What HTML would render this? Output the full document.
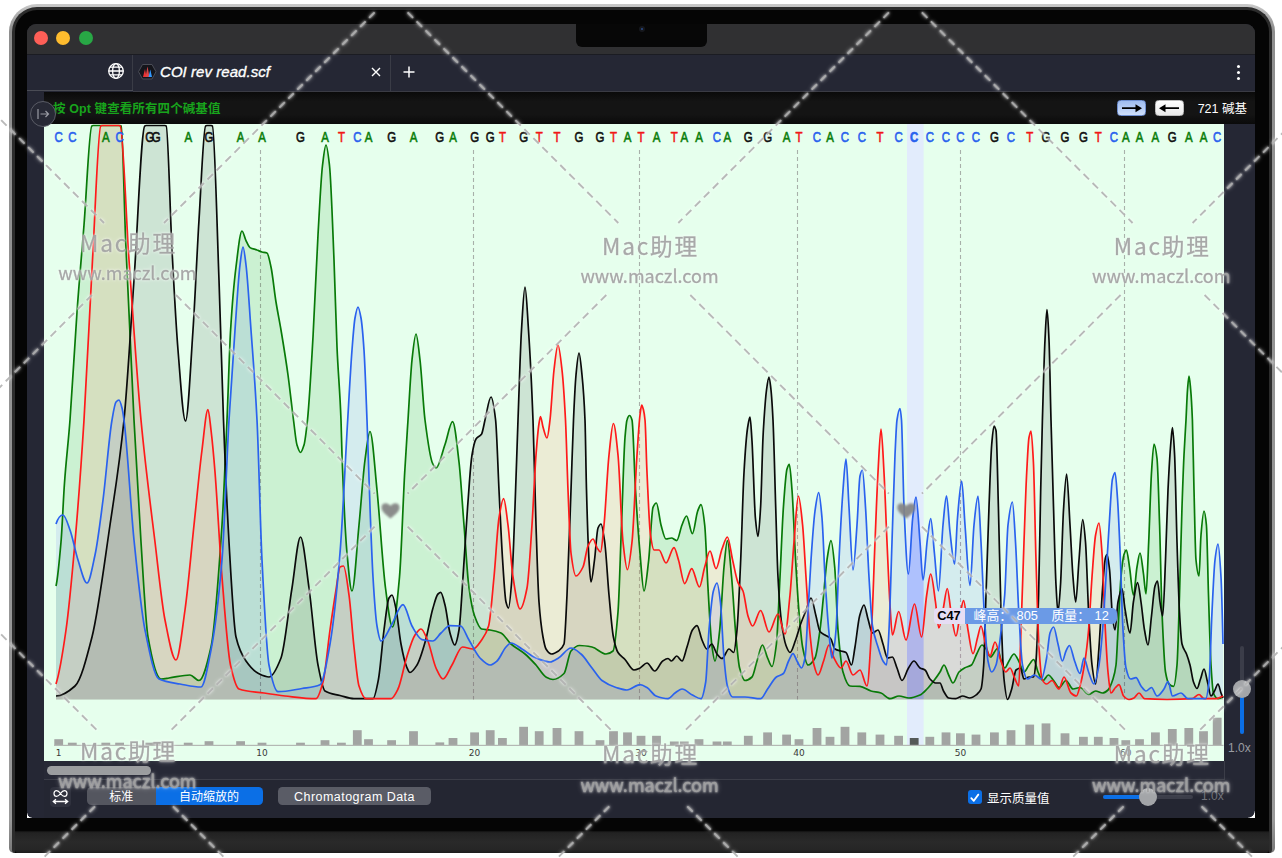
<!DOCTYPE html>
<html lang="zh">
<head>
<meta charset="utf-8">
<title>COI rev read.scf</title>
<style>
html,body{margin:0;padding:0;background:#fff;}
body{width:1282px;height:858px;overflow:hidden;position:relative;font-family:"Liberation Sans","Noto Sans CJK SC",sans-serif;}
.abs{position:absolute;}
#shell{left:9px;top:4.2px;width:1266px;height:849px;border-radius:28px 28px 5px 5px;background:linear-gradient(#c9c9c9,#8e8e8e 3%,#9a9a9a 96%,#777);}
#bezel{left:11.7px;top:7px;width:1260.5px;height:846px;border-radius:25px 25px 3px 3px;background:#050505;border:3.2px solid #2c2c2c;border-bottom:0;box-sizing:border-box;}
#hinge{left:15px;top:830.5px;width:1253.5px;height:22.5px;background:linear-gradient(#101010 0,#222 8%,#2a2a2a 50%,#262626 85%,#1c1c1c 100%);border-radius:0 0 3px 3px;}
#screen{left:27px;top:24px;width:1228px;height:794px;border-radius:9px 9px 0 0;overflow:hidden;background:#252734;}
#titlebar{left:0;top:0;width:1228px;height:29.9px;background:#303032;}
.tl{width:14px;height:14px;border-radius:7px;top:7.4px;}
#notch{left:549px;top:0;width:131px;height:22.7px;background:#070707;border-radius:0 0 6px 6px;}
#cam{left:611.5px;top:2px;width:6px;height:6px;border-radius:3px;background:#16181d;}
#cam i{position:absolute;left:2px;top:2px;width:2px;height:2px;border-radius:1px;background:#2a4a8a;}
#tabbar{left:0;top:29.9px;width:1228px;height:36.6px;background:#252734;border-top:1px solid #1b1c22;box-sizing:border-box;}
#tabsep1{left:105px;top:31px;width:1px;height:36px;background:#3a3c46;}
#tabsep2{left:363px;top:31px;width:1px;height:36px;background:#3a3c46;}
#tabline{left:0;top:66px;width:106px;height:1px;background:#4a4c55;}
#tabline2{left:106px;top:66.5px;width:1122px;height:1px;background:#3a3b44;}
#tabtitle{left:133px;top:38.5px;color:#fff;font-style:italic;font-size:15px;letter-spacing:.05px;-webkit-text-stroke:.35px #fff;white-space:nowrap;}
#hint{left:17px;top:67.5px;width:1211px;height:32.5px;background:linear-gradient(#0a0a0a,#141414 30%,#141414 70%,#0a0a0a);}
#hinttext{left:26px;top:74px;color:#18a31c;font-weight:bold;font-size:12.5px;white-space:nowrap;letter-spacing:.1px;}
#count{right:8px;top:74px;color:#fff;font-size:12.5px;white-space:nowrap;}
.abtn{top:75.5px;width:29px;height:16.5px;border-radius:3.5px;box-sizing:border-box;}
#fwd{left:1090px;background:linear-gradient(#9fbcf0,#cfe0fb);border:1px solid #6f8fd0;}
#rev{left:1128px;background:linear-gradient(#fff,#e9e9e9);border:1px solid #bdbdbd;}
#chart{left:17px;top:100px;width:1179.5px;height:636.5px;background:#e6ffed;overflow:hidden;}
svg.plot{position:absolute;left:0;top:0;}
svg.txt{position:absolute;left:0;top:0;overflow:visible;}
#circ{left:3.2px;top:77px;width:24px;height:24px;border-radius:13.5px;background:#272935;border:1.3px solid #5a5c66;box-sizing:content-box;}
#scroll{left:17px;top:736.5px;width:1179.5px;height:18px;background:#272936;border-bottom:1px solid #3b3d48;border-right:1px solid #3b3d48;}
#thumb{left:19.5px;top:742px;width:104.5px;height:9px;border-radius:4.5px;background:#9b9d9f;}
#tool{left:17px;top:755.5px;width:1211px;height:38.5px;background:#242632;}
#fit{left:22.5px;top:762.5px;width:21px;height:20px;border-radius:4px;background:#30323e;}
.seg{top:763px;height:18px;color:#fff;font-size:12px;line-height:20px;overflow:hidden;text-align:center;white-space:nowrap;}
#seg1{left:60px;width:68.5px;background:#54565f;border-radius:4.5px 0 0 4.5px;}
#seg2{left:128.5px;width:107px;background:#0b6fe6;border-radius:0 4.5px 4.5px 0;}
#cdata{left:251px;width:153px;background:#5a5c66;border-radius:4.5px;font-size:12.5px;letter-spacing:.45px;}
#chk{left:941px;top:766px;width:13.5px;height:13.5px;border-radius:3px;background:#0b6fe6;}
#chklabel{left:960px;top:763.5px;color:#fff;font-size:12.5px;white-space:nowrap;}
#hs0{left:1076px;top:771px;width:90px;height:4px;border-radius:2px;background:#3b3d49;}
#hs1{left:1076px;top:771px;width:45px;height:4px;border-radius:2px;background:#0b6fe6;}
#hsk{left:1112px;top:764px;width:18px;height:18px;border-radius:9px;background:#a3a5a8;}
#hsl{left:1174px;top:764.5px;color:#70727a;font-size:12px;}
#vs0{left:1213.3px;top:622px;width:4px;height:88px;border-radius:2px;background:#3b3d49;}
#vs1{left:1213.3px;top:665px;width:4px;height:45px;border-radius:2px;background:#0b6fe6;}
#vsk{left:1206.3px;top:656px;width:18px;height:18px;border-radius:9px;background:#a3a5a8;}
#vsl{left:1201px;top:717px;color:#9a9ca2;font-size:12px;}
#corner{left:1221px;top:787px;width:7px;height:7px;background:radial-gradient(circle at 0 0,#242632 6.3px,#fff 7px);}
#tip{left:889.7px;top:484.2px;height:15.4px;white-space:nowrap;font-size:12.8px;line-height:15.4px;}
#tip b{display:inline-block;background:#e6ddf4;color:#000;padding:0 2px 0 3.5px;border-radius:4px 0 0 4px;height:15.4px;width:26px;}
#tip span{display:inline-block;background:#6b9ae6;color:#fff;border-radius:0 5px 5px 0;height:15.4px;width:152px;text-align:center;word-spacing:1px;}
.wm{color:rgba(150,150,150,.82);text-shadow:0 0 3px rgba(255,255,255,.75),0 0 1px rgba(255,255,255,.6);white-space:nowrap;text-align:center;width:200px;font-family:"Liberation Sans","Noto Sans CJK SC",sans-serif;}
.wm .a{font-size:22.5px;letter-spacing:2.2px;line-height:26px;}
.wm .b{font-size:18.5px;line-height:26px;margin-top:4px;letter-spacing:.2px;}
</style>
</head>
<body>
<div id="shell" class="abs"></div>
<div id="bezel" class="abs"></div>
<div id="hinge" class="abs"></div>
<div id="screen" class="abs">
  <div id="titlebar" class="abs"></div>
  <div class="abs tl" style="left:6.6px;background:#fe5f57"></div>
  <div class="abs tl" style="left:29px;background:#febc2e"></div>
  <div class="abs tl" style="left:51.7px;background:#28a745"></div>
  <div id="notch" class="abs"></div><div id="cam" class="abs"><i></i></div>
  <div id="tabbar" class="abs"></div>
  <div id="tabsep1" class="abs"></div><div id="tabsep2" class="abs"></div>
  <div id="tabline" class="abs"></div><div id="tabline2" class="abs"></div>
  <svg class="abs" style="left:80px;top:38px" width="18" height="18" viewBox="0 0 18 18" fill="none" stroke="#fff" stroke-width="1.3"><circle cx="9" cy="9" r="7.3"/><ellipse cx="9" cy="9" rx="3.4" ry="7.3"/><path d="M1.7 9H16.3M2.8 5.2H15.2M2.8 12.8H15.2"/></svg>
  <svg class="abs" style="left:110px;top:39px" width="20" height="18" viewBox="0 0 20 18"><path d="M5.5 1.5H15L19 8.7L15 16H5.5L1.5 8.7Z" fill="#14151b" stroke="#4a4c56" stroke-width="1"/><path d="M6 14L8 6L9.5 14Z" fill="#e33"/><path d="M8.5 14L10.5 3.5L12.5 14Z" fill="#d44"/><path d="M11.5 14L13.3 6.5L15 14Z" fill="#39f"/></svg>
  <div id="tabtitle" class="abs">COI rev read.scf</div>
  <svg class="abs" style="left:344px;top:43px" width="10" height="10" viewBox="0 0 10 10" stroke="#fff" stroke-width="1.4"><path d="M1 1L9 9M9 1L1 9"/></svg>
  <svg class="abs" style="left:376px;top:42px" width="12" height="12" viewBox="0 0 12 12" stroke="#fff" stroke-width="1.5"><path d="M6 0.5V11.5M0.5 6H11.5"/></svg>
  <div class="abs" style="left:1209.5px;top:41px;width:3px;height:3px;border-radius:2px;background:#fff;box-shadow:0 6px 0 #fff,0 12px 0 #fff"></div>
  <div id="hint" class="abs"></div>
  <div id="hinttext" class="abs">按 Opt 键查看所有四个碱基值</div>
  <div id="fwd" class="abs abtn"><svg width="27" height="14.5" viewBox="0 0 27 14.5"><path d="M4 7.2H19" stroke="#000" stroke-width="1.8"/><path d="M17.5 3.2L24 7.2L17.5 11.2Z" fill="#000"/></svg></div>
  <div id="rev" class="abs abtn"><svg width="27" height="14.5" viewBox="0 0 27 14.5"><path d="M8 7.2H23" stroke="#000" stroke-width="1.8"/><path d="M9.5 3.2L3 7.2L9.5 11.2Z" fill="#000"/></svg></div>
  <div id="count" class="abs">721 碱基</div>
  <div id="chart" class="abs">
<svg class="plot" width="1179.5" height="636.5" viewBox="0 0 1179.5 636.5">
<rect x="863.0" y="0" width="16.6" height="621.5" fill="#e2ecfc"/>
<line x1="216.5" y1="26" x2="216.5" y2="575.5" stroke="#a8b0aa" stroke-width="1.1" stroke-dasharray="4 3"/>
<line x1="429.5" y1="26" x2="429.5" y2="575.5" stroke="#a8b0aa" stroke-width="1.1" stroke-dasharray="4 3"/>
<line x1="595.5" y1="26" x2="595.5" y2="575.5" stroke="#a8b0aa" stroke-width="1.1" stroke-dasharray="4 3"/>
<line x1="753.5" y1="26" x2="753.5" y2="575.5" stroke="#a8b0aa" stroke-width="1.1" stroke-dasharray="4 3"/>
<line x1="916.5" y1="26" x2="916.5" y2="575.5" stroke="#a8b0aa" stroke-width="1.1" stroke-dasharray="4 3"/>
<line x1="1080.5" y1="26" x2="1080.5" y2="575.5" stroke="#a8b0aa" stroke-width="1.1" stroke-dasharray="4 3"/>
<path d="M12.0 462.0C13.7 455.2 15.3 437.6 17.0 418.0C18.2 404.3 19.3 375.1 20.5 359.0C22.3 333.6 24.2 320.0 26.0 296.0C28.3 265.5 30.7 220.1 33.0 188.0C35.3 155.9 37.7 130.3 40.0 101.0C42.6 68.4 45.2 3.7 47.8 2.0C48.2 1.7 48.6 1.5 49.0 1.5C58.0 1.5 67.0 1.5 76.0 1.5C76.4 1.5 76.8 1.7 77.2 2.0C78.7 3.0 80.2 82.6 81.7 118.0C84.5 183.4 87.2 243.0 90.0 296.0C92.3 340.7 94.7 382.4 97.0 418.0C99.3 453.6 101.7 500.0 104.0 513.0C108.3 537.1 112.7 555.0 117.0 555.0C119.7 555.0 122.3 554.4 125.0 554.0C132.0 553.1 139.0 551.0 146.0 551.0C149.0 551.0 152.0 556.5 155.0 556.5C159.0 556.5 163.0 541.0 167.0 523.0C170.7 506.5 174.3 456.4 178.0 401.0C179.7 375.8 181.3 334.2 183.0 296.0C184.2 268.5 185.4 225.6 186.6 206.0C188.4 176.7 190.2 157.3 192.0 143.0C194.0 127.1 196.0 107.0 198.0 107.0C199.3 107.0 200.7 113.9 202.0 116.6C203.3 119.3 204.7 122.8 206.0 123.6C208.3 125.0 210.7 125.1 213.0 126.0C214.7 126.6 216.3 127.6 218.0 128.0C219.7 128.4 221.3 128.3 223.0 129.0C224.3 129.5 225.7 136.9 227.0 143.0C228.7 150.7 230.3 167.6 232.0 178.0C233.7 188.4 235.3 196.1 237.0 206.0C239.3 219.9 241.7 234.1 244.0 251.0C245.8 264.3 247.7 282.1 249.5 296.0C250.7 304.9 251.8 317.2 253.0 321.0C254.2 324.8 255.3 328.5 256.5 328.5C257.7 328.5 258.8 324.8 260.0 321.0C261.2 317.2 262.3 307.0 263.5 296.0C265.3 278.7 267.2 244.9 269.0 213.0C270.7 184.0 272.3 140.2 274.0 111.0C275.5 84.7 277.0 54.0 278.5 41.5C279.7 31.8 280.8 21.0 282.0 21.0C283.2 21.0 284.3 31.1 285.5 41.5C287.0 54.9 288.5 99.1 290.0 136.0C291.0 160.6 292.0 200.4 293.0 223.0C294.3 253.2 295.7 261.9 297.0 296.0C297.3 304.5 297.7 322.1 298.0 331.0C299.7 375.7 301.3 410.7 303.0 429.0C304.7 447.3 306.3 467.0 308.0 467.0C310.3 467.0 312.7 424.6 315.0 401.0C317.0 380.8 319.0 350.8 321.0 336.0C322.7 323.7 324.3 307.5 326.0 307.5C328.3 307.5 330.7 343.5 333.0 366.0C335.8 393.3 338.7 443.0 341.5 464.0C343.8 481.3 346.2 503.0 348.5 503.0C350.8 503.0 353.2 478.2 355.5 453.0C357.2 434.3 359.0 379.0 360.7 348.5C361.8 329.1 362.9 313.0 364.0 296.0C365.3 275.4 366.7 248.1 368.0 236.0C369.3 223.9 370.7 210.0 372.0 210.0C373.3 210.0 374.7 224.9 376.0 236.0C377.7 249.9 379.3 282.8 381.0 296.0C383.6 316.3 386.1 334.7 388.7 339.7C389.8 341.9 390.9 344.0 392.0 344.0C395.0 344.0 398.0 328.9 401.0 320.5C403.5 313.4 406.1 297.7 408.6 297.7C410.7 297.7 412.9 319.8 415.0 338.0C416.7 352.2 418.3 380.0 420.0 401.0C421.7 422.0 423.3 452.0 425.0 464.0C426.9 477.5 428.7 486.9 430.6 492.0C432.9 498.4 435.3 504.5 437.6 505.0C440.4 505.6 443.2 505.5 446.0 506.0C449.7 506.6 453.3 507.4 457.0 509.0C460.3 510.5 463.7 517.1 467.0 520.0C471.7 524.1 476.3 526.1 481.0 530.0C484.7 533.1 488.3 537.0 492.0 541.0C495.3 544.6 498.7 551.2 502.0 553.0C504.3 554.2 506.7 555.5 509.0 555.5C512.7 555.5 516.3 553.1 520.0 549.5C522.3 547.2 524.7 529.6 527.0 527.0C529.8 523.9 532.7 521.5 535.5 521.5C539.7 521.5 543.8 522.2 548.0 523.0C552.7 523.9 557.3 530.0 562.0 530.0C564.3 530.0 566.7 529.0 569.0 527.0C570.7 525.6 572.3 508.4 574.0 488.0C575.2 473.7 576.3 430.1 577.5 401.0C578.7 371.9 579.8 328.0 581.0 313.5C581.7 305.2 582.3 298.0 583.0 296.0C583.8 293.4 584.7 291.5 585.5 291.5C586.3 291.5 587.2 293.4 588.0 296.0C589.2 299.7 590.3 346.6 591.5 366.0C593.0 390.9 594.5 412.1 596.0 429.0C597.3 444.0 598.7 467.0 600.0 467.0C601.6 467.0 603.1 449.5 604.7 436.0C606.1 423.7 607.6 386.7 609.0 383.4C610.1 380.8 611.3 379.0 612.4 379.0C613.9 379.0 615.5 395.6 617.0 401.0C618.7 406.9 620.3 415.0 622.0 415.0C623.8 415.0 625.7 414.0 627.5 414.0C629.2 414.0 631.0 416.6 632.7 416.6C634.5 416.6 636.2 405.2 638.0 401.0C639.5 397.4 641.0 392.0 642.5 392.0C644.5 392.0 646.4 409.6 648.4 409.6C650.2 409.6 651.9 391.6 653.7 387.0C654.8 384.2 655.9 380.6 657.0 380.6C658.2 380.6 659.5 390.3 660.7 401.0C661.8 410.5 662.9 445.4 664.0 464.0C665.2 484.9 666.5 510.6 667.7 520.0C668.8 528.4 669.9 537.0 671.0 537.0C672.6 537.0 674.1 520.3 675.7 506.0C677.1 492.9 678.6 457.4 680.0 443.0C681.1 431.6 682.3 416.6 683.4 416.6C684.8 416.6 686.2 438.2 687.6 453.0C689.1 468.5 690.5 497.6 692.0 513.0C693.2 525.6 694.4 539.4 695.6 544.0C697.4 550.8 699.2 556.5 701.0 556.5C703.3 556.5 705.7 555.1 708.0 553.0C709.7 551.5 711.3 542.1 713.0 537.0C714.8 531.5 716.6 521.0 718.4 521.0C720.1 521.0 721.9 530.2 723.6 534.0C725.1 537.2 726.5 542.5 728.0 542.5C729.5 542.5 730.9 532.0 732.4 520.0C733.6 510.2 734.8 476.4 736.0 453.0C737.1 430.9 738.3 399.3 739.4 383.4C740.6 366.5 741.8 348.8 743.0 345.0C743.8 342.5 744.5 340.4 745.3 340.4C746.2 340.4 747.1 354.7 748.0 366.0C749.2 381.0 750.4 415.5 751.6 436.0C752.7 455.4 753.9 474.5 755.0 488.0C756.2 502.3 757.4 516.8 758.6 523.0C760.4 532.2 762.2 541.0 764.0 541.0C766.3 541.0 768.7 538.1 771.0 534.0C772.7 531.1 774.3 518.0 776.0 506.0C777.2 497.3 778.4 483.0 779.6 471.0C780.7 459.7 781.9 443.5 783.0 436.0C784.3 427.1 785.7 416.6 787.0 416.6C788.2 416.6 789.5 430.1 790.7 443.0C791.8 454.5 792.9 492.8 794.0 506.0C795.7 526.0 797.3 542.4 799.0 548.0C801.3 555.8 803.7 561.8 806.0 562.0C809.3 562.3 812.7 562.2 816.0 562.4C819.7 562.7 823.3 566.0 827.0 567.0C830.3 567.9 833.7 568.0 837.0 569.0C840.0 569.9 843.0 574.7 846.0 574.7C849.0 574.7 852.0 572.0 855.0 572.0C858.3 572.0 861.7 574.0 865.0 574.0C868.7 574.0 872.3 572.6 876.0 571.0C878.3 570.0 880.7 567.3 883.0 565.0C885.3 562.7 887.7 559.6 890.0 556.5C892.0 553.9 894.0 551.2 896.0 548.0C897.3 545.9 898.7 541.0 900.0 541.0C901.6 541.0 903.1 547.9 904.7 551.0C906.1 553.8 907.6 559.0 909.0 559.0C911.0 559.0 913.0 550.1 915.0 548.0C916.8 546.1 918.7 545.0 920.5 544.0C922.8 542.7 925.2 542.7 927.5 541.0C929.2 539.7 931.0 533.3 932.7 530.0C934.5 526.7 936.2 521.0 938.0 521.0C939.2 521.0 940.3 522.7 941.5 524.0C943.2 525.9 944.8 533.0 946.5 533.0C948.8 533.0 951.2 524.5 953.5 524.5C954.7 524.5 955.8 533.0 957.0 536.0C958.2 539.2 959.5 544.0 960.7 544.0C962.1 544.0 963.6 539.2 965.0 537.0C966.7 534.5 968.3 530.0 970.0 530.0C971.6 530.0 973.1 534.3 974.7 537.0C976.5 540.1 978.2 548.0 980.0 548.0C981.7 548.0 983.3 543.1 985.0 541.0C986.6 539.0 988.1 535.5 989.7 535.5C991.1 535.5 992.6 544.9 994.0 548.0C995.7 551.6 997.3 556.5 999.0 556.5C1000.8 556.5 1002.6 551.0 1004.4 551.0C1006.1 551.0 1007.9 554.5 1009.6 556.5C1011.4 558.6 1013.2 563.5 1015.0 563.5C1017.3 563.5 1019.7 556.5 1022.0 556.5C1024.3 556.5 1026.7 565.0 1029.0 565.0C1031.3 565.0 1033.7 563.5 1036.0 563.5C1038.9 563.5 1041.7 570.5 1044.6 570.5C1046.9 570.5 1049.3 567.0 1051.6 567.0C1053.9 567.0 1056.3 569.0 1058.6 569.0C1060.4 569.0 1062.2 567.6 1064.0 566.0C1065.7 564.5 1067.3 560.1 1069.0 555.0C1070.0 551.9 1071.0 548.7 1072.0 541.0C1072.7 535.9 1073.3 517.7 1074.0 506.0C1075.0 488.4 1076.0 463.5 1077.0 453.0C1078.0 442.5 1079.0 433.6 1080.0 430.6C1080.8 428.2 1081.6 426.0 1082.4 426.0C1083.4 426.0 1084.5 436.6 1085.5 443.0C1086.8 451.0 1088.1 471.0 1089.4 471.0C1090.6 471.0 1091.8 449.9 1093.0 443.0C1094.0 437.2 1095.0 429.0 1096.0 429.0C1097.2 429.0 1098.3 441.9 1099.5 450.0C1100.3 455.8 1101.2 470.0 1102.0 470.0C1102.9 470.0 1103.8 437.5 1104.7 418.0C1105.6 397.8 1106.6 363.0 1107.5 348.5C1108.3 335.6 1109.2 320.0 1110.0 320.0C1111.0 320.0 1112.0 326.2 1113.0 334.5C1113.9 341.7 1114.7 374.9 1115.6 401.0C1116.4 425.0 1117.2 469.0 1118.0 488.0C1119.2 515.8 1120.3 541.3 1121.5 548.0C1122.7 554.7 1123.8 558.9 1125.0 560.0C1126.5 561.4 1128.1 562.4 1129.6 562.4C1130.7 562.4 1131.9 553.0 1133.0 541.0C1133.8 532.2 1134.7 497.0 1135.5 471.0C1136.3 445.0 1137.2 407.8 1138.0 383.0C1138.7 363.2 1139.3 344.9 1140.0 331.0C1140.7 317.1 1141.3 308.5 1142.0 296.0C1142.5 286.6 1143.0 272.4 1143.5 266.0C1144.0 259.6 1144.5 252.0 1145.0 252.0C1145.6 252.0 1146.1 259.6 1146.7 266.0C1147.3 272.4 1147.8 281.7 1148.4 296.0C1148.9 309.5 1149.5 345.2 1150.0 366.0C1150.7 392.0 1151.3 429.5 1152.0 436.0C1153.0 445.7 1154.0 452.0 1155.0 452.0C1155.7 452.0 1156.3 418.9 1157.0 411.0C1158.0 399.1 1159.0 387.0 1160.0 387.0C1160.8 387.0 1161.6 392.9 1162.4 401.0C1163.1 408.1 1163.8 449.6 1164.5 471.0C1165.3 496.4 1166.2 527.3 1167.0 541.0C1167.8 554.1 1168.6 567.0 1169.4 569.0C1170.9 572.8 1172.5 574.7 1174.0 574.7C1175.7 574.7 1177.3 574.4 1179.0 572.0L1179.0 575.5L12.0 575.5Z" fill="rgba(0,128,0,0.115)" stroke="none"/>
<path d="M12.0 572.0C18.3 572.0 24.7 567.7 31.0 562.0C36.7 556.9 42.3 535.2 48.0 513.0C54.0 489.4 60.0 442.0 66.0 401.0C70.7 369.1 75.3 342.4 80.0 296.0C83.3 262.9 86.7 203.1 90.0 156.0C93.6 105.1 97.2 4.3 100.8 2.0C101.2 1.7 101.6 1.5 102.0 1.5C108.3 1.5 114.7 1.5 121.0 1.5C121.4 1.5 121.8 1.7 122.2 2.0C124.1 3.3 126.1 89.8 128.0 126.0C130.0 163.5 132.0 201.6 134.0 226.0C136.5 256.5 139.0 297.0 141.5 297.0C144.0 297.0 146.5 242.8 149.0 206.0C151.0 176.6 153.0 128.1 155.0 96.0C157.2 60.7 159.4 3.5 161.6 2.0C162.0 1.7 162.4 1.5 162.8 1.5C164.3 1.5 165.7 1.5 167.2 1.5C167.6 1.5 168.0 1.7 168.4 2.0C170.6 3.5 172.8 96.8 175.0 156.0C176.5 196.4 178.0 256.9 179.5 296.0C181.3 343.7 183.2 386.8 185.0 418.0C187.3 457.7 189.7 503.1 192.0 513.0C195.3 527.2 198.7 532.2 202.0 537.0C206.2 543.0 210.3 547.4 214.5 549.5C218.0 551.2 221.5 553.0 225.0 553.0C229.0 553.0 233.0 544.2 237.0 534.0C240.7 524.6 244.3 486.6 248.0 464.0C250.8 446.5 253.7 413.0 256.5 413.0C259.3 413.0 262.2 444.0 265.0 464.0C268.0 485.1 271.0 525.7 274.0 541.0C276.3 552.9 278.7 565.6 281.0 567.0C286.0 570.1 291.0 570.2 296.0 571.5C300.7 572.7 305.3 574.7 310.0 574.7C316.3 574.7 322.7 574.7 329.0 574.7C330.8 574.7 332.7 564.4 334.5 555.0C336.3 545.6 338.2 519.6 340.0 506.0C341.7 493.6 343.3 476.7 345.0 474.0C346.0 472.4 347.0 471.0 348.0 471.0C349.3 471.0 350.7 478.9 352.0 485.0C353.7 492.7 355.3 511.4 357.0 520.0C358.8 529.5 360.7 538.2 362.5 542.5C363.7 545.2 364.8 548.5 366.0 548.5C368.3 548.5 370.7 544.6 373.0 541.0C375.9 536.5 378.8 526.2 381.7 516.0C384.0 507.8 386.4 493.0 388.7 485.0C390.5 479.0 392.2 471.6 394.0 470.0C394.9 469.2 395.8 468.4 396.7 468.4C398.1 468.4 399.6 475.5 401.0 481.0C402.7 487.4 404.3 503.2 406.0 509.0C407.6 514.5 409.1 521.0 410.7 521.0C412.1 521.0 413.6 514.0 415.0 506.0C416.3 498.6 417.7 471.9 419.0 453.0C420.5 431.3 422.1 403.4 423.6 383.0C425.1 363.5 426.5 339.7 428.0 331.0C429.3 323.1 430.7 317.0 432.0 315.0C433.9 312.2 435.7 312.9 437.6 310.0C438.7 308.2 439.9 300.5 441.0 296.0C443.0 288.0 445.0 273.0 447.0 273.0C448.5 273.0 450.1 283.3 451.6 296.0C452.7 305.4 453.9 343.3 455.0 366.0C456.2 390.0 457.4 417.9 458.6 436.0C459.7 453.1 460.9 473.6 462.0 478.0C462.8 481.2 463.7 484.0 464.5 484.0C465.7 484.0 466.8 468.2 468.0 453.0C469.0 440.0 470.0 408.9 471.0 383.0C472.0 357.1 473.0 323.3 474.0 296.0C475.2 264.1 476.3 225.4 477.5 206.0C478.7 186.6 479.8 163.0 481.0 163.0C482.2 163.0 483.3 188.4 484.5 206.0C486.0 228.6 487.5 257.1 489.0 296.0C490.0 321.9 491.0 371.4 492.0 401.0C493.0 430.6 494.0 464.6 495.0 478.0C496.3 495.8 497.7 505.8 499.0 513.0C500.0 518.4 501.0 523.4 502.0 525.0C503.8 527.9 505.7 530.0 507.5 530.0C509.8 530.0 512.2 528.5 514.5 527.0C516.3 525.8 518.2 524.7 520.0 520.0C521.0 517.4 522.0 490.9 523.0 471.0C524.3 444.4 525.7 402.2 527.0 366.0C527.8 343.4 528.7 314.3 529.5 296.0C530.3 277.7 531.2 259.8 532.0 251.0C533.0 240.4 534.0 229.0 535.0 229.0C536.0 229.0 537.0 241.1 538.0 251.0C539.0 260.9 540.0 271.9 541.0 296.0C541.5 308.0 542.0 348.1 542.5 366.0C543.3 395.8 544.2 423.0 545.0 436.0C545.7 446.4 546.3 458.0 547.0 458.0C548.2 458.0 549.3 444.7 550.5 436.0C551.7 427.3 552.8 406.7 554.0 404.0C555.0 401.7 556.0 400.0 557.0 400.0C558.2 400.0 559.5 409.5 560.7 418.0C562.1 427.9 563.6 455.6 565.0 471.0C566.5 486.8 567.9 505.7 569.4 513.0C570.9 520.7 572.5 526.0 574.0 528.5C576.3 532.2 578.7 533.0 581.0 535.5C584.0 538.7 587.0 546.0 590.0 546.0C592.0 546.0 594.0 544.9 596.0 544.0C598.3 542.9 600.7 539.0 603.0 539.0C605.6 539.0 608.1 547.0 610.7 547.0C613.4 547.0 616.0 538.8 618.7 537.0C620.5 535.8 622.2 534.5 624.0 534.5C625.2 534.5 626.3 537.0 627.5 537.0C629.2 537.0 631.0 532.0 632.7 532.0C634.5 532.0 636.2 537.0 638.0 537.0C639.7 537.0 641.3 527.9 643.0 523.0C644.8 517.7 646.6 508.6 648.4 506.0C649.9 503.8 651.5 501.6 653.0 501.6C654.7 501.6 656.3 512.3 658.0 516.0C659.7 519.7 661.3 525.0 663.0 525.0C664.6 525.0 666.1 520.0 667.7 520.0C669.5 520.0 671.2 527.9 673.0 530.0C674.7 532.0 676.3 534.5 678.0 534.5C680.3 534.5 682.7 525.0 685.0 525.0C686.6 525.0 688.1 528.5 689.7 528.5C690.8 528.5 691.9 516.9 693.0 506.0C694.2 493.7 695.5 463.3 696.7 436.0C697.8 411.6 698.9 367.1 700.0 348.5C701.2 327.6 702.5 310.6 703.7 303.0C704.5 298.3 705.2 293.0 706.0 293.0C706.7 293.0 707.3 306.8 708.0 317.0C709.1 334.3 710.3 382.1 711.4 394.0C712.3 403.1 713.1 412.4 714.0 412.4C714.9 412.4 715.7 397.2 716.6 383.0C717.4 369.9 718.2 330.4 719.0 313.5C719.3 306.5 719.7 300.9 720.0 296.0C720.8 283.8 721.7 272.0 722.5 266.0C723.3 260.0 724.2 253.0 725.0 253.0C725.7 253.0 726.3 260.0 727.0 266.0C727.7 272.0 728.3 282.6 729.0 296.0C729.9 314.1 730.8 354.8 731.7 383.0C732.5 407.0 733.2 438.8 734.0 453.0C735.2 475.3 736.4 490.1 737.6 499.0C739.1 509.9 740.5 517.7 742.0 521.5C743.3 524.9 744.7 528.5 746.0 528.5C747.9 528.5 749.7 520.9 751.6 516.0C753.4 511.3 755.2 504.0 757.0 499.0C758.7 494.4 760.3 490.8 762.0 486.6C763.7 482.4 765.3 474.0 767.0 474.0C768.7 474.0 770.3 485.8 772.0 492.0C773.3 497.0 774.7 505.9 776.0 507.5C777.7 509.5 779.3 509.9 781.0 511.0C782.9 512.2 784.7 512.6 786.6 514.5C788.1 516.0 789.5 524.1 791.0 525.0C793.0 526.2 795.0 526.4 797.0 527.0C798.7 527.5 800.3 527.6 802.0 528.5C803.8 529.5 805.7 541.0 807.5 541.0C808.7 541.0 809.8 529.8 811.0 523.0C812.5 514.1 814.1 497.6 815.6 492.0C817.1 486.7 818.5 481.0 820.0 481.0C821.3 481.0 822.7 490.6 824.0 495.0C825.5 499.9 827.0 509.0 828.5 509.0C830.3 509.0 832.2 506.0 834.0 506.0C835.7 506.0 837.3 515.1 839.0 520.0C840.5 524.5 842.1 534.0 843.6 534.0C845.2 534.0 846.8 533.0 848.4 533.0C849.9 533.0 851.5 540.3 853.0 544.0C854.7 548.1 856.3 556.5 858.0 556.5C860.2 556.5 862.3 547.3 864.5 544.0C866.3 541.2 868.2 537.0 870.0 537.0C872.0 537.0 874.0 542.8 876.0 544.0C877.7 545.0 879.3 544.9 881.0 546.0C882.7 547.1 884.3 553.3 886.0 555.0C887.8 556.9 889.7 559.0 891.5 559.0C893.0 559.0 894.5 559.0 896.0 559.0C897.2 559.0 898.3 565.0 899.5 567.0C901.2 570.0 903.0 573.7 904.7 574.0C907.0 574.5 909.4 574.7 911.7 574.7C914.0 574.7 916.4 572.0 918.7 572.0C921.0 572.0 923.4 574.0 925.7 574.0C928.0 574.0 930.4 572.2 932.7 570.5C934.1 569.4 935.6 568.4 937.0 565.0C937.9 562.9 938.8 553.6 939.7 541.0C940.5 530.3 941.2 493.9 942.0 471.0C943.0 441.1 944.0 408.8 945.0 383.0C945.9 359.8 946.8 331.1 947.7 320.5C948.5 311.5 949.2 302.0 950.0 302.0C950.7 302.0 951.3 303.8 952.0 306.5C952.8 309.8 953.6 354.5 954.4 383.0C955.3 413.8 956.1 462.9 957.0 488.0C958.0 517.0 959.0 545.6 960.0 555.0C961.2 566.0 962.3 575.5 963.5 575.5C964.9 575.5 966.3 569.5 967.7 565.0C969.1 560.4 970.6 547.2 972.0 546.0C973.5 544.8 974.9 544.0 976.4 544.0C977.6 544.0 978.8 555.0 980.0 555.0C981.7 555.0 983.3 553.0 985.0 553.0C986.6 553.0 988.1 553.0 989.7 553.0C990.5 553.0 991.2 545.3 992.0 537.0C992.9 527.6 993.7 500.5 994.6 471.0C995.3 447.2 996.0 397.5 996.7 366.0C997.3 340.5 997.8 316.2 998.4 296.0C999.3 265.2 1000.1 233.4 1001.0 216.0C1001.7 202.6 1002.3 185.5 1003.0 185.5C1003.7 185.5 1004.3 201.3 1005.0 216.0C1005.7 230.7 1006.3 271.2 1007.0 296.0C1007.9 328.3 1008.7 357.6 1009.6 386.0C1010.4 412.3 1011.2 446.1 1012.0 461.0C1012.7 473.4 1013.3 488.0 1014.0 488.0C1014.8 488.0 1015.7 473.4 1016.5 461.0C1017.5 446.1 1018.5 401.9 1019.5 386.0C1020.5 369.6 1021.6 350.0 1022.6 350.0C1023.7 350.0 1024.9 382.7 1026.0 401.0C1027.0 417.1 1028.0 441.0 1029.0 453.0C1029.9 463.8 1030.8 478.0 1031.7 478.0C1032.8 478.0 1033.9 448.9 1035.0 436.0C1036.2 421.5 1037.5 395.6 1038.7 395.6C1039.6 395.6 1040.6 407.1 1041.5 418.0C1042.5 430.1 1043.6 468.9 1044.6 488.0C1045.7 509.0 1046.9 532.0 1048.0 541.0C1049.2 550.5 1050.4 560.0 1051.6 560.0C1052.7 560.0 1053.9 537.8 1055.0 523.0C1056.2 507.3 1057.4 479.4 1058.6 464.0C1059.5 452.0 1060.5 437.1 1061.4 434.0C1061.9 432.2 1062.5 430.6 1063.0 430.6C1063.9 430.6 1064.7 438.5 1065.6 446.0C1066.5 454.1 1067.5 484.5 1068.4 492.0C1069.3 499.0 1070.1 506.0 1071.0 506.0C1072.0 506.0 1073.0 483.1 1074.0 478.0C1075.3 471.2 1076.7 464.5 1078.0 464.5C1079.0 464.5 1080.0 479.3 1081.0 485.0C1082.7 494.5 1084.3 509.0 1086.0 509.0C1087.1 509.0 1088.3 485.0 1089.4 478.0C1090.8 469.3 1092.2 458.6 1093.6 458.6C1094.7 458.6 1095.9 470.5 1097.0 478.0C1098.2 485.8 1099.3 499.5 1100.5 506.0C1101.7 512.5 1102.8 521.0 1104.0 521.0C1105.2 521.0 1106.3 501.8 1107.5 492.0C1108.7 482.2 1109.8 465.7 1111.0 462.0C1111.8 459.4 1112.7 457.0 1113.5 457.0C1114.3 457.0 1115.2 472.6 1116.0 478.0C1116.9 483.8 1117.8 492.0 1118.7 492.0C1119.6 492.0 1120.6 457.8 1121.5 436.0C1122.3 416.5 1123.2 383.3 1124.0 366.0C1125.0 345.2 1126.0 328.1 1127.0 317.0C1127.5 311.4 1128.0 303.7 1128.5 303.7C1129.2 303.7 1129.9 317.7 1130.6 331.0C1131.4 346.2 1132.2 392.7 1133.0 418.0C1133.8 444.4 1134.7 473.4 1135.5 488.0C1136.3 502.6 1137.2 516.6 1138.0 520.0C1139.5 526.1 1141.0 526.1 1142.5 530.0C1143.7 533.1 1144.8 536.5 1146.0 541.0C1147.2 545.5 1148.3 554.9 1149.5 558.0C1150.7 561.1 1151.8 564.5 1153.0 564.5C1154.2 564.5 1155.3 558.2 1156.5 555.0C1157.7 551.8 1158.8 545.0 1160.0 545.0C1161.2 545.0 1162.3 553.5 1163.5 558.0C1164.7 562.5 1165.8 572.0 1167.0 572.0C1168.2 572.0 1169.3 568.9 1170.5 567.0C1171.7 565.1 1172.8 560.0 1174.0 560.0C1175.0 560.0 1176.0 566.3 1177.0 569.0C1177.7 570.8 1178.3 572.5 1179.0 574.0L1179.0 575.5L12.0 575.5Z" fill="rgba(0,0,0,0.105)" stroke="none"/>
<path d="M12.0 560.0C15.3 549.7 18.7 529.3 22.0 506.0C25.0 485.0 28.0 452.1 31.0 418.0C34.0 383.9 37.0 343.4 40.0 296.0C42.8 251.3 45.7 185.2 48.5 136.0C51.3 87.9 54.0 3.8 56.8 2.0C57.2 1.7 57.6 1.5 58.0 1.5C63.7 1.5 69.3 1.5 75.0 1.5C75.4 1.5 75.8 1.7 76.2 2.0C79.1 3.9 82.1 94.2 85.0 136.0C89.0 193.1 93.0 253.6 97.0 296.0C101.7 345.5 106.3 379.7 111.0 418.0C114.3 445.4 117.7 479.4 121.0 496.0C124.7 514.3 128.3 536.0 132.0 536.0C135.0 536.0 138.0 507.0 141.0 486.0C144.0 465.0 147.0 429.2 150.0 401.0C152.7 375.9 155.3 346.8 158.0 326.0C160.0 310.4 162.0 285.5 164.0 285.5C165.0 285.5 166.0 297.8 167.0 306.0C168.3 316.9 169.7 331.8 171.0 348.0C173.3 376.4 175.7 424.2 178.0 453.0C180.8 487.9 183.7 528.4 186.5 541.0C189.3 553.6 192.2 564.0 195.0 565.0C203.3 568.0 211.7 567.7 220.0 569.0C227.0 570.1 234.0 571.2 241.0 572.0C251.3 573.1 261.7 574.7 272.0 574.7C274.3 574.7 276.7 566.4 279.0 558.0C281.3 549.6 283.7 522.4 286.0 506.0C288.0 492.0 290.0 478.3 292.0 466.0C293.3 457.8 294.7 443.7 296.0 443.0C297.2 442.4 298.3 442.0 299.5 442.0C301.3 442.0 303.2 458.1 305.0 471.0C306.7 482.7 308.3 508.1 310.0 523.0C311.7 537.9 313.3 556.9 315.0 562.0C317.3 569.1 319.7 574.7 322.0 574.7C330.3 574.7 338.7 574.7 347.0 574.7C349.3 574.7 351.7 569.6 354.0 565.0C356.8 559.4 359.7 542.8 362.5 534.0C365.3 525.2 368.2 515.0 371.0 511.0C373.0 508.2 375.0 505.0 377.0 505.0C379.2 505.0 381.3 511.2 383.5 516.0C386.3 522.2 389.2 538.0 392.0 544.0C394.3 548.9 396.7 555.0 399.0 555.0C402.0 555.0 405.0 545.9 408.0 541.0C411.5 535.3 415.0 523.0 418.5 523.0C422.0 523.0 425.5 525.0 429.0 525.0C431.9 525.0 434.7 520.0 437.6 516.0C439.9 512.8 442.3 509.9 444.6 502.0C446.4 495.9 448.2 471.5 450.0 453.0C451.7 435.9 453.3 404.2 455.0 394.0C456.5 384.6 458.1 374.7 459.6 374.7C461.1 374.7 462.5 389.9 464.0 401.0C465.7 413.6 467.3 442.2 469.0 453.0C471.3 468.1 473.7 485.0 476.0 485.0C478.3 485.0 480.7 475.7 483.0 464.0C484.7 455.6 486.3 425.6 488.0 401.0C489.3 381.3 490.7 348.3 492.0 331.0C493.0 318.0 494.0 305.7 495.0 299.5C495.5 296.4 496.0 292.5 496.5 292.5C497.3 292.5 498.2 300.2 499.0 303.0C500.3 307.5 501.7 314.0 503.0 314.0C504.0 314.0 505.0 304.0 506.0 296.0C507.3 285.4 508.7 257.1 510.0 246.0C511.3 234.9 512.7 221.0 514.0 221.0C515.3 221.0 516.7 234.3 518.0 246.0C519.2 256.2 520.3 273.5 521.5 296.0C522.3 312.1 523.2 345.9 524.0 366.0C525.0 390.1 526.0 421.0 527.0 429.0C528.7 442.3 530.3 452.0 532.0 452.0C534.3 452.0 536.7 447.7 539.0 443.0C540.7 439.6 542.3 425.5 544.0 422.0C545.7 418.5 547.3 415.0 549.0 415.0C550.3 415.0 551.7 421.5 553.0 423.6C554.2 425.4 555.3 428.0 556.5 428.0C557.7 428.0 558.8 412.4 560.0 401.0C561.7 384.7 563.3 346.7 565.0 331.0C566.5 317.2 567.9 299.5 569.4 299.5C570.9 299.5 572.5 316.0 574.0 331.0C575.7 347.3 577.3 402.8 579.0 418.0C580.5 431.4 581.9 445.6 583.4 445.6C584.9 445.6 586.5 431.6 588.0 418.0C589.7 403.2 591.3 355.9 593.0 331.0C594.0 316.1 595.0 298.9 596.0 291.0C596.6 286.5 597.1 281.0 597.7 281.0C598.3 281.0 598.9 283.6 599.5 286.0C600.0 288.0 600.5 290.8 601.0 296.0C601.7 302.9 602.3 334.1 603.0 348.5C604.2 373.7 605.3 402.9 606.5 411.0C607.7 419.1 608.8 426.0 610.0 426.0C611.7 426.0 613.3 426.0 615.0 426.0C617.3 426.0 619.7 439.0 622.0 439.0C624.7 439.0 627.3 423.6 630.0 423.6C631.5 423.6 633.0 431.2 634.5 436.0C636.6 442.6 638.6 459.6 640.7 459.6C643.0 459.6 645.4 444.6 647.7 444.6C650.3 444.6 652.8 463.0 655.4 463.0C657.2 463.0 658.9 448.9 660.7 443.0C662.5 437.1 664.2 427.0 666.0 427.0C668.0 427.0 670.0 444.6 672.0 444.6C674.0 444.6 676.0 430.3 678.0 425.0C679.8 420.3 681.6 413.0 683.4 413.0C685.1 413.0 686.9 428.5 688.6 436.0C690.4 443.7 692.2 454.3 694.0 458.6C695.7 462.6 697.3 462.8 699.0 467.0C700.7 471.2 702.3 487.0 704.0 492.0C705.5 496.6 707.1 502.0 708.6 502.0C711.3 502.0 713.9 486.5 716.6 486.5C719.4 486.5 722.2 508.0 725.0 508.0C728.0 508.0 731.0 490.0 734.0 490.0C736.3 490.0 738.7 510.0 741.0 510.0C742.7 510.0 744.3 487.5 746.0 471.0C747.3 457.8 748.7 433.6 750.0 418.0C751.5 400.8 752.9 372.0 754.4 372.0C755.8 372.0 757.2 387.5 758.6 401.0C759.7 411.9 760.9 436.0 762.0 453.0C763.2 471.0 764.4 493.5 765.6 506.0C767.1 521.3 768.5 535.5 770.0 541.0C771.3 546.0 772.7 551.0 774.0 551.0C775.9 551.0 777.7 542.1 779.6 537.0C781.4 532.1 783.2 521.0 785.0 521.0C786.7 521.0 788.3 530.9 790.0 534.0C792.3 538.4 794.7 544.0 797.0 544.0C798.7 544.0 800.3 537.0 802.0 537.0C804.3 537.0 806.7 551.0 809.0 551.0C811.3 551.0 813.7 546.0 816.0 546.0C818.3 546.0 820.7 562.0 823.0 562.0C824.5 562.0 826.0 531.3 827.5 506.0C828.7 486.3 829.8 446.1 831.0 418.0C832.0 393.9 833.0 366.3 834.0 348.5C835.0 330.7 836.0 305.0 837.0 305.0C838.0 305.0 839.0 330.7 840.0 348.5C841.0 366.3 842.0 396.0 843.0 418.0C844.0 440.0 845.0 465.5 846.0 481.0C846.8 493.4 847.6 511.0 848.4 511.0C850.5 511.0 852.6 487.5 854.7 487.5C857.1 487.5 859.6 516.0 862.0 516.0C864.8 516.0 867.7 480.0 870.5 480.0C872.9 480.0 875.2 513.0 877.6 513.0C879.3 513.0 881.0 481.8 882.7 471.0C884.0 462.5 885.4 450.0 886.7 450.0C888.3 450.0 889.9 467.2 891.5 478.0C892.6 485.4 893.7 504.0 894.8 504.0C896.2 504.0 897.6 492.5 899.0 486.0C900.4 479.4 901.9 464.5 903.3 464.5C904.5 464.5 905.8 481.2 907.0 488.0C908.7 497.2 910.3 512.0 912.0 512.0C913.3 512.0 914.7 497.0 916.0 491.0C917.2 485.6 918.4 476.7 919.6 476.7C921.1 476.7 922.5 497.9 924.0 506.0C925.7 515.2 927.3 529.6 929.0 529.6C930.6 529.6 932.1 518.4 933.7 513.0C934.8 509.2 935.9 502.0 937.0 502.0C938.5 502.0 940.0 515.2 941.5 520.0C943.0 524.8 944.5 532.0 946.0 532.0C947.7 532.0 949.3 518.0 951.0 518.0C953.0 518.0 955.0 531.6 957.0 537.0C958.6 541.2 960.1 548.0 961.7 548.0C963.1 548.0 964.6 544.0 966.0 544.0C967.7 544.0 969.3 551.6 971.0 555.0C972.2 557.5 973.5 562.0 974.7 562.0C975.5 562.0 976.2 526.3 977.0 506.0C978.0 479.5 979.0 445.4 980.0 418.0C980.9 393.4 981.8 365.6 982.7 348.5C983.5 333.9 984.2 317.5 985.0 313.5C985.7 310.0 986.3 307.0 987.0 307.0C987.8 307.0 988.6 322.7 989.4 338.0C990.3 354.6 991.1 407.5 992.0 436.0C993.0 468.9 994.0 507.4 995.0 523.0C996.0 538.6 997.0 552.9 998.0 555.0C999.5 558.2 1001.1 560.0 1002.6 560.0C1004.4 560.0 1006.2 556.5 1008.0 556.5C1010.3 556.5 1012.7 565.0 1015.0 565.0C1016.7 565.0 1018.3 553.0 1020.0 553.0C1022.3 553.0 1024.7 567.0 1027.0 569.0C1028.8 570.6 1030.6 572.0 1032.4 572.0C1033.6 572.0 1034.8 566.2 1036.0 562.0C1037.7 556.1 1039.3 547.7 1041.0 537.0C1042.2 529.3 1043.4 519.3 1044.6 506.0C1045.7 493.4 1046.9 468.1 1048.0 453.0C1049.2 437.0 1050.4 417.5 1051.6 411.0C1052.7 404.9 1053.9 399.0 1055.0 399.0C1056.0 399.0 1057.0 415.0 1058.0 429.0C1059.0 443.0 1060.0 479.8 1061.0 499.0C1062.0 518.2 1063.0 538.2 1064.0 548.0C1065.0 557.8 1066.0 569.0 1067.0 569.0C1068.5 569.0 1070.0 564.9 1071.5 563.5C1072.7 562.4 1073.8 560.7 1075.0 560.7C1076.5 560.7 1078.1 570.4 1079.6 572.0C1081.4 573.9 1083.2 575.5 1085.0 575.5C1086.7 575.5 1088.3 574.8 1090.0 574.0C1091.7 573.2 1093.3 569.0 1095.0 569.0C1096.8 569.0 1098.7 574.5 1100.5 574.7C1108.0 575.3 1115.5 575.5 1123.0 575.5C1131.3 575.5 1139.7 575.3 1148.0 574.7C1150.3 574.5 1152.7 570.5 1155.0 570.5C1156.7 570.5 1158.3 574.7 1160.0 574.7C1164.0 574.7 1168.0 574.7 1172.0 574.7C1174.3 574.7 1176.7 573.2 1179.0 572.0L1179.0 575.5L12.0 575.5Z" fill="rgba(255,160,120,0.2)" stroke="none"/>
<path d="M12.0 400.0C14.3 393.0 16.7 391.0 19.0 391.0C21.3 391.0 23.7 399.7 26.0 406.0C28.7 413.2 31.3 427.9 34.0 436.0C37.0 445.2 40.0 459.0 43.0 459.0C45.7 459.0 48.3 443.4 51.0 431.0C53.7 418.6 56.3 396.6 59.0 376.0C62.0 352.8 65.0 313.2 68.0 296.0C69.3 288.4 70.7 279.5 72.0 278.0C73.0 276.9 74.0 276.0 75.0 276.0C76.0 276.0 77.0 280.2 78.0 284.0C78.7 286.5 79.3 291.0 80.0 296.0C83.3 320.8 86.7 383.5 90.0 416.0C93.7 451.8 97.3 487.7 101.0 506.0C105.7 529.3 110.3 552.8 115.0 555.0C122.0 558.3 129.0 558.8 136.0 560.0C143.0 561.2 150.0 563.0 157.0 563.0C160.3 563.0 163.7 542.9 167.0 526.0C170.7 507.4 174.3 479.9 178.0 436.0C180.3 408.0 182.7 335.9 185.0 296.0C187.0 261.8 189.0 233.8 191.0 206.0C192.7 182.8 194.3 154.3 196.0 141.0C197.0 133.0 198.0 123.0 199.0 123.0C200.0 123.0 201.0 133.0 202.0 141.0C203.7 154.3 205.3 182.8 207.0 206.0C209.0 233.8 211.0 256.6 213.0 296.0C214.7 328.9 216.3 402.9 218.0 436.0C220.3 482.4 222.7 529.1 225.0 541.0C228.0 556.3 231.0 567.7 234.0 567.7C242.0 567.7 250.0 565.8 258.0 564.5C264.0 563.5 270.0 563.3 276.0 560.7C279.3 559.2 282.7 538.7 286.0 520.0C289.3 501.3 292.7 469.3 296.0 429.0C298.6 398.0 301.1 338.9 303.7 296.0C305.1 272.0 306.6 244.2 308.0 226.0C309.0 213.3 310.0 199.5 311.0 194.0C312.0 188.5 313.0 183.0 314.0 183.0C315.0 183.0 316.0 188.5 317.0 194.0C318.0 199.5 319.0 211.4 320.0 226.0C321.0 240.6 322.0 270.1 323.0 296.0C324.0 321.9 325.0 357.1 326.0 383.0C327.0 408.9 328.0 436.7 329.0 453.0C330.3 474.7 331.7 494.3 333.0 502.0C334.3 509.7 335.7 517.0 337.0 517.0C340.3 517.0 343.7 507.4 347.0 502.0C351.0 495.5 355.0 480.6 359.0 480.6C362.0 480.6 365.0 496.8 368.0 502.0C371.3 507.8 374.7 514.8 378.0 515.6C381.6 516.5 385.1 517.0 388.7 517.0C391.5 517.0 394.2 511.5 397.0 509.0C400.0 506.3 403.0 501.6 406.0 501.6C409.5 501.6 413.1 501.7 416.6 502.0C419.4 502.2 422.2 511.4 425.0 516.0C428.7 522.1 432.3 530.4 436.0 534.0C439.3 537.2 442.7 541.0 446.0 541.0C448.3 541.0 450.7 538.9 453.0 537.0C456.0 534.5 459.0 526.1 462.0 523.0C463.7 521.3 465.3 519.0 467.0 519.0C470.7 519.0 474.3 522.8 478.0 525.0C482.7 527.7 487.3 532.2 492.0 534.0C496.7 535.8 501.3 538.0 506.0 538.0C508.8 538.0 511.7 535.7 514.5 534.0C518.7 531.6 522.8 524.0 527.0 524.0C530.3 524.0 533.7 527.3 537.0 530.0C540.7 533.0 544.3 539.4 548.0 544.0C551.3 548.2 554.7 554.1 558.0 556.5C562.7 559.9 567.3 562.1 572.0 563.5C575.7 564.6 579.3 566.0 583.0 566.0C587.3 566.0 591.7 560.7 596.0 560.7C598.3 560.7 600.7 562.2 603.0 563.5C606.0 565.2 609.0 570.9 612.0 572.0C616.0 573.5 620.0 574.7 624.0 574.7C626.3 574.7 628.7 570.6 631.0 569.0C633.3 567.4 635.7 565.0 638.0 565.0C641.5 565.0 644.9 569.3 648.4 571.0C651.3 572.4 654.1 574.7 657.0 574.7C658.6 574.7 660.1 567.4 661.7 558.0C662.8 551.4 663.9 518.6 665.0 506.0C666.5 489.1 667.9 472.1 669.4 467.0C670.6 462.8 671.8 459.0 673.0 459.0C674.1 459.0 675.3 468.7 676.4 478.0C677.6 487.8 678.8 521.1 680.0 534.0C681.1 546.2 682.3 558.0 683.4 562.0C685.1 568.1 686.9 573.0 688.6 573.0C692.7 573.0 696.9 573.0 701.0 573.0C706.2 573.0 711.4 574.7 716.6 574.7C718.9 574.7 721.3 568.2 723.6 565.0C726.5 561.0 729.5 555.1 732.4 553.0C734.7 551.3 737.1 551.5 739.4 549.5C741.1 548.0 742.9 540.4 744.6 537.0C746.1 534.1 747.5 529.6 749.0 529.6C750.3 529.6 751.7 534.7 753.0 537.0C754.5 539.5 756.0 544.0 757.5 544.0C758.7 544.0 759.8 539.7 761.0 534.0C762.0 529.1 763.0 504.3 764.0 488.0C765.0 471.7 766.0 450.5 767.0 436.0C768.3 416.7 769.7 396.3 771.0 387.0C772.2 378.4 773.5 368.7 774.7 368.7C775.8 368.7 776.9 381.8 778.0 394.0C779.0 405.1 780.0 436.5 781.0 453.0C782.3 475.0 783.7 495.2 785.0 509.0C786.0 519.3 787.0 534.0 788.0 534.0C789.3 534.0 790.7 520.7 792.0 506.0C793.0 494.9 794.0 456.1 795.0 436.0C796.3 409.2 797.7 383.1 799.0 366.0C800.0 353.2 801.0 335.0 802.0 335.0C803.0 335.0 804.0 367.1 805.0 383.0C806.3 404.2 807.7 446.0 809.0 446.0C810.3 446.0 811.7 418.9 813.0 401.0C814.0 387.6 815.0 356.2 816.0 352.0C816.8 348.6 817.6 346.0 818.4 346.0C819.4 346.0 820.5 367.6 821.5 383.0C822.7 400.4 823.8 433.8 825.0 453.0C826.2 472.2 827.3 494.7 828.5 502.0C830.3 513.5 832.2 517.1 834.0 523.0C835.7 528.4 837.3 534.4 839.0 537.0C840.2 538.8 841.3 541.0 842.5 541.0C843.3 541.0 844.2 521.6 845.0 506.0C846.0 487.2 847.0 447.2 848.0 418.0C849.0 388.8 850.0 352.5 851.0 331.0C851.7 316.7 852.3 300.4 853.0 296.0C854.0 289.4 855.0 284.5 856.0 284.5C856.5 284.5 857.0 290.0 857.5 296.0C858.3 305.9 859.2 364.7 860.0 383.0C861.5 415.2 862.9 450.0 864.4 450.0C865.8 450.0 867.3 406.1 868.7 394.0C869.8 384.7 870.9 373.0 872.0 373.0C873.3 373.0 874.7 402.1 876.0 418.0C877.0 430.0 878.0 456.0 879.0 456.0C880.5 456.0 881.9 425.8 883.4 415.0C884.5 406.9 885.6 394.5 886.7 394.5C887.9 394.5 889.2 417.4 890.4 429.0C891.7 441.5 893.1 467.0 894.4 467.0C895.9 467.0 897.5 417.0 899.0 401.0C900.2 388.8 901.3 371.8 902.5 371.8C903.7 371.8 904.8 398.2 906.0 408.0C907.5 420.9 909.1 440.0 910.6 440.0C911.6 440.0 912.5 405.1 913.5 394.0C914.9 377.9 916.3 357.0 917.7 357.0C918.8 357.0 919.9 387.0 921.0 401.0C922.7 422.2 924.3 461.5 926.0 461.5C927.3 461.5 928.7 414.1 930.0 401.0C931.3 387.9 932.7 372.0 934.0 372.0C935.0 372.0 936.0 400.1 937.0 418.0C938.1 438.3 939.3 474.0 940.4 492.0C941.6 511.1 942.8 531.2 944.0 537.0C945.2 542.9 946.5 548.0 947.7 548.0C949.1 548.0 950.6 544.7 952.0 541.0C953.3 537.5 954.7 526.0 956.0 516.0C957.6 504.2 959.1 492.1 960.7 471.0C961.8 456.2 962.9 410.5 964.0 401.0C965.5 388.3 966.9 378.0 968.4 378.0C969.4 378.0 970.5 401.5 971.5 418.0C972.7 436.6 973.8 472.3 975.0 492.0C976.2 511.7 977.3 535.3 978.5 541.0C980.1 549.0 981.8 555.0 983.4 555.0C985.7 555.0 988.1 551.0 990.4 551.0C992.7 551.0 995.1 555.0 997.4 555.0C999.1 555.0 1000.9 543.2 1002.6 534.0C1003.7 528.0 1004.9 512.1 1006.0 509.0C1007.2 505.7 1008.4 503.0 1009.6 503.0C1011.1 503.0 1012.5 514.3 1014.0 520.0C1015.5 525.7 1016.9 537.0 1018.4 537.0C1019.6 537.0 1020.8 529.4 1022.0 527.0C1023.1 524.7 1024.3 521.5 1025.4 521.5C1027.1 521.5 1028.9 532.5 1030.6 537.0C1032.4 541.7 1034.2 549.5 1036.0 549.5C1037.3 549.5 1038.7 534.0 1040.0 534.0C1041.5 534.0 1043.1 544.0 1044.6 548.0C1046.4 552.6 1048.2 560.0 1050.0 560.0C1051.7 560.0 1053.3 550.3 1055.0 541.0C1056.2 534.3 1057.4 520.4 1058.6 506.0C1059.7 492.4 1060.9 471.1 1062.0 453.0C1063.2 433.8 1064.4 411.9 1065.6 394.0C1066.5 380.1 1067.5 359.5 1068.4 355.4C1069.3 351.6 1070.1 348.5 1071.0 348.5C1071.9 348.5 1072.7 363.8 1073.6 376.0C1074.5 389.2 1075.5 413.7 1076.4 436.0C1077.3 456.7 1078.1 490.9 1079.0 506.0C1080.0 523.4 1081.0 539.8 1082.0 544.0C1083.5 550.5 1085.1 555.0 1086.6 555.0C1088.4 555.0 1090.2 553.7 1092.0 553.7C1093.7 553.7 1095.3 559.9 1097.0 562.0C1098.7 564.1 1100.3 567.0 1102.0 567.0C1103.8 567.0 1105.7 563.5 1107.5 563.5C1109.3 563.5 1111.2 572.0 1113.0 572.0C1115.3 572.0 1117.7 568.1 1120.0 565.0C1121.3 563.2 1122.7 557.5 1124.0 557.5C1125.5 557.5 1127.0 572.0 1128.5 572.0C1131.3 572.0 1134.2 569.0 1137.0 569.0C1139.3 569.0 1141.7 574.7 1144.0 574.7C1149.9 574.7 1155.8 574.7 1161.7 574.7C1162.8 574.7 1163.9 567.2 1165.0 558.0C1166.0 549.6 1167.0 507.9 1168.0 488.0C1169.0 468.1 1170.0 444.2 1171.0 436.0C1172.0 427.8 1173.0 420.0 1174.0 420.0C1175.0 420.0 1176.0 435.9 1177.0 453.0C1177.7 464.4 1178.3 491.7 1179.0 520.0L1179.0 575.5L12.0 575.5Z" fill="rgba(0,0,255,0.075)" stroke="none"/>
<clipPath id="bc"><path d="M12.0 400.0C14.3 393.0 16.7 391.0 19.0 391.0C21.3 391.0 23.7 399.7 26.0 406.0C28.7 413.2 31.3 427.9 34.0 436.0C37.0 445.2 40.0 459.0 43.0 459.0C45.7 459.0 48.3 443.4 51.0 431.0C53.7 418.6 56.3 396.6 59.0 376.0C62.0 352.8 65.0 313.2 68.0 296.0C69.3 288.4 70.7 279.5 72.0 278.0C73.0 276.9 74.0 276.0 75.0 276.0C76.0 276.0 77.0 280.2 78.0 284.0C78.7 286.5 79.3 291.0 80.0 296.0C83.3 320.8 86.7 383.5 90.0 416.0C93.7 451.8 97.3 487.7 101.0 506.0C105.7 529.3 110.3 552.8 115.0 555.0C122.0 558.3 129.0 558.8 136.0 560.0C143.0 561.2 150.0 563.0 157.0 563.0C160.3 563.0 163.7 542.9 167.0 526.0C170.7 507.4 174.3 479.9 178.0 436.0C180.3 408.0 182.7 335.9 185.0 296.0C187.0 261.8 189.0 233.8 191.0 206.0C192.7 182.8 194.3 154.3 196.0 141.0C197.0 133.0 198.0 123.0 199.0 123.0C200.0 123.0 201.0 133.0 202.0 141.0C203.7 154.3 205.3 182.8 207.0 206.0C209.0 233.8 211.0 256.6 213.0 296.0C214.7 328.9 216.3 402.9 218.0 436.0C220.3 482.4 222.7 529.1 225.0 541.0C228.0 556.3 231.0 567.7 234.0 567.7C242.0 567.7 250.0 565.8 258.0 564.5C264.0 563.5 270.0 563.3 276.0 560.7C279.3 559.2 282.7 538.7 286.0 520.0C289.3 501.3 292.7 469.3 296.0 429.0C298.6 398.0 301.1 338.9 303.7 296.0C305.1 272.0 306.6 244.2 308.0 226.0C309.0 213.3 310.0 199.5 311.0 194.0C312.0 188.5 313.0 183.0 314.0 183.0C315.0 183.0 316.0 188.5 317.0 194.0C318.0 199.5 319.0 211.4 320.0 226.0C321.0 240.6 322.0 270.1 323.0 296.0C324.0 321.9 325.0 357.1 326.0 383.0C327.0 408.9 328.0 436.7 329.0 453.0C330.3 474.7 331.7 494.3 333.0 502.0C334.3 509.7 335.7 517.0 337.0 517.0C340.3 517.0 343.7 507.4 347.0 502.0C351.0 495.5 355.0 480.6 359.0 480.6C362.0 480.6 365.0 496.8 368.0 502.0C371.3 507.8 374.7 514.8 378.0 515.6C381.6 516.5 385.1 517.0 388.7 517.0C391.5 517.0 394.2 511.5 397.0 509.0C400.0 506.3 403.0 501.6 406.0 501.6C409.5 501.6 413.1 501.7 416.6 502.0C419.4 502.2 422.2 511.4 425.0 516.0C428.7 522.1 432.3 530.4 436.0 534.0C439.3 537.2 442.7 541.0 446.0 541.0C448.3 541.0 450.7 538.9 453.0 537.0C456.0 534.5 459.0 526.1 462.0 523.0C463.7 521.3 465.3 519.0 467.0 519.0C470.7 519.0 474.3 522.8 478.0 525.0C482.7 527.7 487.3 532.2 492.0 534.0C496.7 535.8 501.3 538.0 506.0 538.0C508.8 538.0 511.7 535.7 514.5 534.0C518.7 531.6 522.8 524.0 527.0 524.0C530.3 524.0 533.7 527.3 537.0 530.0C540.7 533.0 544.3 539.4 548.0 544.0C551.3 548.2 554.7 554.1 558.0 556.5C562.7 559.9 567.3 562.1 572.0 563.5C575.7 564.6 579.3 566.0 583.0 566.0C587.3 566.0 591.7 560.7 596.0 560.7C598.3 560.7 600.7 562.2 603.0 563.5C606.0 565.2 609.0 570.9 612.0 572.0C616.0 573.5 620.0 574.7 624.0 574.7C626.3 574.7 628.7 570.6 631.0 569.0C633.3 567.4 635.7 565.0 638.0 565.0C641.5 565.0 644.9 569.3 648.4 571.0C651.3 572.4 654.1 574.7 657.0 574.7C658.6 574.7 660.1 567.4 661.7 558.0C662.8 551.4 663.9 518.6 665.0 506.0C666.5 489.1 667.9 472.1 669.4 467.0C670.6 462.8 671.8 459.0 673.0 459.0C674.1 459.0 675.3 468.7 676.4 478.0C677.6 487.8 678.8 521.1 680.0 534.0C681.1 546.2 682.3 558.0 683.4 562.0C685.1 568.1 686.9 573.0 688.6 573.0C692.7 573.0 696.9 573.0 701.0 573.0C706.2 573.0 711.4 574.7 716.6 574.7C718.9 574.7 721.3 568.2 723.6 565.0C726.5 561.0 729.5 555.1 732.4 553.0C734.7 551.3 737.1 551.5 739.4 549.5C741.1 548.0 742.9 540.4 744.6 537.0C746.1 534.1 747.5 529.6 749.0 529.6C750.3 529.6 751.7 534.7 753.0 537.0C754.5 539.5 756.0 544.0 757.5 544.0C758.7 544.0 759.8 539.7 761.0 534.0C762.0 529.1 763.0 504.3 764.0 488.0C765.0 471.7 766.0 450.5 767.0 436.0C768.3 416.7 769.7 396.3 771.0 387.0C772.2 378.4 773.5 368.7 774.7 368.7C775.8 368.7 776.9 381.8 778.0 394.0C779.0 405.1 780.0 436.5 781.0 453.0C782.3 475.0 783.7 495.2 785.0 509.0C786.0 519.3 787.0 534.0 788.0 534.0C789.3 534.0 790.7 520.7 792.0 506.0C793.0 494.9 794.0 456.1 795.0 436.0C796.3 409.2 797.7 383.1 799.0 366.0C800.0 353.2 801.0 335.0 802.0 335.0C803.0 335.0 804.0 367.1 805.0 383.0C806.3 404.2 807.7 446.0 809.0 446.0C810.3 446.0 811.7 418.9 813.0 401.0C814.0 387.6 815.0 356.2 816.0 352.0C816.8 348.6 817.6 346.0 818.4 346.0C819.4 346.0 820.5 367.6 821.5 383.0C822.7 400.4 823.8 433.8 825.0 453.0C826.2 472.2 827.3 494.7 828.5 502.0C830.3 513.5 832.2 517.1 834.0 523.0C835.7 528.4 837.3 534.4 839.0 537.0C840.2 538.8 841.3 541.0 842.5 541.0C843.3 541.0 844.2 521.6 845.0 506.0C846.0 487.2 847.0 447.2 848.0 418.0C849.0 388.8 850.0 352.5 851.0 331.0C851.7 316.7 852.3 300.4 853.0 296.0C854.0 289.4 855.0 284.5 856.0 284.5C856.5 284.5 857.0 290.0 857.5 296.0C858.3 305.9 859.2 364.7 860.0 383.0C861.5 415.2 862.9 450.0 864.4 450.0C865.8 450.0 867.3 406.1 868.7 394.0C869.8 384.7 870.9 373.0 872.0 373.0C873.3 373.0 874.7 402.1 876.0 418.0C877.0 430.0 878.0 456.0 879.0 456.0C880.5 456.0 881.9 425.8 883.4 415.0C884.5 406.9 885.6 394.5 886.7 394.5C887.9 394.5 889.2 417.4 890.4 429.0C891.7 441.5 893.1 467.0 894.4 467.0C895.9 467.0 897.5 417.0 899.0 401.0C900.2 388.8 901.3 371.8 902.5 371.8C903.7 371.8 904.8 398.2 906.0 408.0C907.5 420.9 909.1 440.0 910.6 440.0C911.6 440.0 912.5 405.1 913.5 394.0C914.9 377.9 916.3 357.0 917.7 357.0C918.8 357.0 919.9 387.0 921.0 401.0C922.7 422.2 924.3 461.5 926.0 461.5C927.3 461.5 928.7 414.1 930.0 401.0C931.3 387.9 932.7 372.0 934.0 372.0C935.0 372.0 936.0 400.1 937.0 418.0C938.1 438.3 939.3 474.0 940.4 492.0C941.6 511.1 942.8 531.2 944.0 537.0C945.2 542.9 946.5 548.0 947.7 548.0C949.1 548.0 950.6 544.7 952.0 541.0C953.3 537.5 954.7 526.0 956.0 516.0C957.6 504.2 959.1 492.1 960.7 471.0C961.8 456.2 962.9 410.5 964.0 401.0C965.5 388.3 966.9 378.0 968.4 378.0C969.4 378.0 970.5 401.5 971.5 418.0C972.7 436.6 973.8 472.3 975.0 492.0C976.2 511.7 977.3 535.3 978.5 541.0C980.1 549.0 981.8 555.0 983.4 555.0C985.7 555.0 988.1 551.0 990.4 551.0C992.7 551.0 995.1 555.0 997.4 555.0C999.1 555.0 1000.9 543.2 1002.6 534.0C1003.7 528.0 1004.9 512.1 1006.0 509.0C1007.2 505.7 1008.4 503.0 1009.6 503.0C1011.1 503.0 1012.5 514.3 1014.0 520.0C1015.5 525.7 1016.9 537.0 1018.4 537.0C1019.6 537.0 1020.8 529.4 1022.0 527.0C1023.1 524.7 1024.3 521.5 1025.4 521.5C1027.1 521.5 1028.9 532.5 1030.6 537.0C1032.4 541.7 1034.2 549.5 1036.0 549.5C1037.3 549.5 1038.7 534.0 1040.0 534.0C1041.5 534.0 1043.1 544.0 1044.6 548.0C1046.4 552.6 1048.2 560.0 1050.0 560.0C1051.7 560.0 1053.3 550.3 1055.0 541.0C1056.2 534.3 1057.4 520.4 1058.6 506.0C1059.7 492.4 1060.9 471.1 1062.0 453.0C1063.2 433.8 1064.4 411.9 1065.6 394.0C1066.5 380.1 1067.5 359.5 1068.4 355.4C1069.3 351.6 1070.1 348.5 1071.0 348.5C1071.9 348.5 1072.7 363.8 1073.6 376.0C1074.5 389.2 1075.5 413.7 1076.4 436.0C1077.3 456.7 1078.1 490.9 1079.0 506.0C1080.0 523.4 1081.0 539.8 1082.0 544.0C1083.5 550.5 1085.1 555.0 1086.6 555.0C1088.4 555.0 1090.2 553.7 1092.0 553.7C1093.7 553.7 1095.3 559.9 1097.0 562.0C1098.7 564.1 1100.3 567.0 1102.0 567.0C1103.8 567.0 1105.7 563.5 1107.5 563.5C1109.3 563.5 1111.2 572.0 1113.0 572.0C1115.3 572.0 1117.7 568.1 1120.0 565.0C1121.3 563.2 1122.7 557.5 1124.0 557.5C1125.5 557.5 1127.0 572.0 1128.5 572.0C1131.3 572.0 1134.2 569.0 1137.0 569.0C1139.3 569.0 1141.7 574.7 1144.0 574.7C1149.9 574.7 1155.8 574.7 1161.7 574.7C1162.8 574.7 1163.9 567.2 1165.0 558.0C1166.0 549.6 1167.0 507.9 1168.0 488.0C1169.0 468.1 1170.0 444.2 1171.0 436.0C1172.0 427.8 1173.0 420.0 1174.0 420.0C1175.0 420.0 1176.0 435.9 1177.0 453.0C1177.7 464.4 1178.3 491.7 1179.0 520.0L1179.0 575.5L12.0 575.5Z"/></clipPath>
<rect x="863.0" y="0" width="16.6" height="575" fill="rgba(70,120,255,0.25)" clip-path="url(#bc)"/>
<path d="M12.0 462.0C13.7 455.2 15.3 437.6 17.0 418.0C18.2 404.3 19.3 375.1 20.5 359.0C22.3 333.6 24.2 320.0 26.0 296.0C28.3 265.5 30.7 220.1 33.0 188.0C35.3 155.9 37.7 130.3 40.0 101.0C42.6 68.4 45.2 3.7 47.8 2.0C48.2 1.7 48.6 1.5 49.0 1.5C58.0 1.5 67.0 1.5 76.0 1.5C76.4 1.5 76.8 1.7 77.2 2.0C78.7 3.0 80.2 82.6 81.7 118.0C84.5 183.4 87.2 243.0 90.0 296.0C92.3 340.7 94.7 382.4 97.0 418.0C99.3 453.6 101.7 500.0 104.0 513.0C108.3 537.1 112.7 555.0 117.0 555.0C119.7 555.0 122.3 554.4 125.0 554.0C132.0 553.1 139.0 551.0 146.0 551.0C149.0 551.0 152.0 556.5 155.0 556.5C159.0 556.5 163.0 541.0 167.0 523.0C170.7 506.5 174.3 456.4 178.0 401.0C179.7 375.8 181.3 334.2 183.0 296.0C184.2 268.5 185.4 225.6 186.6 206.0C188.4 176.7 190.2 157.3 192.0 143.0C194.0 127.1 196.0 107.0 198.0 107.0C199.3 107.0 200.7 113.9 202.0 116.6C203.3 119.3 204.7 122.8 206.0 123.6C208.3 125.0 210.7 125.1 213.0 126.0C214.7 126.6 216.3 127.6 218.0 128.0C219.7 128.4 221.3 128.3 223.0 129.0C224.3 129.5 225.7 136.9 227.0 143.0C228.7 150.7 230.3 167.6 232.0 178.0C233.7 188.4 235.3 196.1 237.0 206.0C239.3 219.9 241.7 234.1 244.0 251.0C245.8 264.3 247.7 282.1 249.5 296.0C250.7 304.9 251.8 317.2 253.0 321.0C254.2 324.8 255.3 328.5 256.5 328.5C257.7 328.5 258.8 324.8 260.0 321.0C261.2 317.2 262.3 307.0 263.5 296.0C265.3 278.7 267.2 244.9 269.0 213.0C270.7 184.0 272.3 140.2 274.0 111.0C275.5 84.7 277.0 54.0 278.5 41.5C279.7 31.8 280.8 21.0 282.0 21.0C283.2 21.0 284.3 31.1 285.5 41.5C287.0 54.9 288.5 99.1 290.0 136.0C291.0 160.6 292.0 200.4 293.0 223.0C294.3 253.2 295.7 261.9 297.0 296.0C297.3 304.5 297.7 322.1 298.0 331.0C299.7 375.7 301.3 410.7 303.0 429.0C304.7 447.3 306.3 467.0 308.0 467.0C310.3 467.0 312.7 424.6 315.0 401.0C317.0 380.8 319.0 350.8 321.0 336.0C322.7 323.7 324.3 307.5 326.0 307.5C328.3 307.5 330.7 343.5 333.0 366.0C335.8 393.3 338.7 443.0 341.5 464.0C343.8 481.3 346.2 503.0 348.5 503.0C350.8 503.0 353.2 478.2 355.5 453.0C357.2 434.3 359.0 379.0 360.7 348.5C361.8 329.1 362.9 313.0 364.0 296.0C365.3 275.4 366.7 248.1 368.0 236.0C369.3 223.9 370.7 210.0 372.0 210.0C373.3 210.0 374.7 224.9 376.0 236.0C377.7 249.9 379.3 282.8 381.0 296.0C383.6 316.3 386.1 334.7 388.7 339.7C389.8 341.9 390.9 344.0 392.0 344.0C395.0 344.0 398.0 328.9 401.0 320.5C403.5 313.4 406.1 297.7 408.6 297.7C410.7 297.7 412.9 319.8 415.0 338.0C416.7 352.2 418.3 380.0 420.0 401.0C421.7 422.0 423.3 452.0 425.0 464.0C426.9 477.5 428.7 486.9 430.6 492.0C432.9 498.4 435.3 504.5 437.6 505.0C440.4 505.6 443.2 505.5 446.0 506.0C449.7 506.6 453.3 507.4 457.0 509.0C460.3 510.5 463.7 517.1 467.0 520.0C471.7 524.1 476.3 526.1 481.0 530.0C484.7 533.1 488.3 537.0 492.0 541.0C495.3 544.6 498.7 551.2 502.0 553.0C504.3 554.2 506.7 555.5 509.0 555.5C512.7 555.5 516.3 553.1 520.0 549.5C522.3 547.2 524.7 529.6 527.0 527.0C529.8 523.9 532.7 521.5 535.5 521.5C539.7 521.5 543.8 522.2 548.0 523.0C552.7 523.9 557.3 530.0 562.0 530.0C564.3 530.0 566.7 529.0 569.0 527.0C570.7 525.6 572.3 508.4 574.0 488.0C575.2 473.7 576.3 430.1 577.5 401.0C578.7 371.9 579.8 328.0 581.0 313.5C581.7 305.2 582.3 298.0 583.0 296.0C583.8 293.4 584.7 291.5 585.5 291.5C586.3 291.5 587.2 293.4 588.0 296.0C589.2 299.7 590.3 346.6 591.5 366.0C593.0 390.9 594.5 412.1 596.0 429.0C597.3 444.0 598.7 467.0 600.0 467.0C601.6 467.0 603.1 449.5 604.7 436.0C606.1 423.7 607.6 386.7 609.0 383.4C610.1 380.8 611.3 379.0 612.4 379.0C613.9 379.0 615.5 395.6 617.0 401.0C618.7 406.9 620.3 415.0 622.0 415.0C623.8 415.0 625.7 414.0 627.5 414.0C629.2 414.0 631.0 416.6 632.7 416.6C634.5 416.6 636.2 405.2 638.0 401.0C639.5 397.4 641.0 392.0 642.5 392.0C644.5 392.0 646.4 409.6 648.4 409.6C650.2 409.6 651.9 391.6 653.7 387.0C654.8 384.2 655.9 380.6 657.0 380.6C658.2 380.6 659.5 390.3 660.7 401.0C661.8 410.5 662.9 445.4 664.0 464.0C665.2 484.9 666.5 510.6 667.7 520.0C668.8 528.4 669.9 537.0 671.0 537.0C672.6 537.0 674.1 520.3 675.7 506.0C677.1 492.9 678.6 457.4 680.0 443.0C681.1 431.6 682.3 416.6 683.4 416.6C684.8 416.6 686.2 438.2 687.6 453.0C689.1 468.5 690.5 497.6 692.0 513.0C693.2 525.6 694.4 539.4 695.6 544.0C697.4 550.8 699.2 556.5 701.0 556.5C703.3 556.5 705.7 555.1 708.0 553.0C709.7 551.5 711.3 542.1 713.0 537.0C714.8 531.5 716.6 521.0 718.4 521.0C720.1 521.0 721.9 530.2 723.6 534.0C725.1 537.2 726.5 542.5 728.0 542.5C729.5 542.5 730.9 532.0 732.4 520.0C733.6 510.2 734.8 476.4 736.0 453.0C737.1 430.9 738.3 399.3 739.4 383.4C740.6 366.5 741.8 348.8 743.0 345.0C743.8 342.5 744.5 340.4 745.3 340.4C746.2 340.4 747.1 354.7 748.0 366.0C749.2 381.0 750.4 415.5 751.6 436.0C752.7 455.4 753.9 474.5 755.0 488.0C756.2 502.3 757.4 516.8 758.6 523.0C760.4 532.2 762.2 541.0 764.0 541.0C766.3 541.0 768.7 538.1 771.0 534.0C772.7 531.1 774.3 518.0 776.0 506.0C777.2 497.3 778.4 483.0 779.6 471.0C780.7 459.7 781.9 443.5 783.0 436.0C784.3 427.1 785.7 416.6 787.0 416.6C788.2 416.6 789.5 430.1 790.7 443.0C791.8 454.5 792.9 492.8 794.0 506.0C795.7 526.0 797.3 542.4 799.0 548.0C801.3 555.8 803.7 561.8 806.0 562.0C809.3 562.3 812.7 562.2 816.0 562.4C819.7 562.7 823.3 566.0 827.0 567.0C830.3 567.9 833.7 568.0 837.0 569.0C840.0 569.9 843.0 574.7 846.0 574.7C849.0 574.7 852.0 572.0 855.0 572.0C858.3 572.0 861.7 574.0 865.0 574.0C868.7 574.0 872.3 572.6 876.0 571.0C878.3 570.0 880.7 567.3 883.0 565.0C885.3 562.7 887.7 559.6 890.0 556.5C892.0 553.9 894.0 551.2 896.0 548.0C897.3 545.9 898.7 541.0 900.0 541.0C901.6 541.0 903.1 547.9 904.7 551.0C906.1 553.8 907.6 559.0 909.0 559.0C911.0 559.0 913.0 550.1 915.0 548.0C916.8 546.1 918.7 545.0 920.5 544.0C922.8 542.7 925.2 542.7 927.5 541.0C929.2 539.7 931.0 533.3 932.7 530.0C934.5 526.7 936.2 521.0 938.0 521.0C939.2 521.0 940.3 522.7 941.5 524.0C943.2 525.9 944.8 533.0 946.5 533.0C948.8 533.0 951.2 524.5 953.5 524.5C954.7 524.5 955.8 533.0 957.0 536.0C958.2 539.2 959.5 544.0 960.7 544.0C962.1 544.0 963.6 539.2 965.0 537.0C966.7 534.5 968.3 530.0 970.0 530.0C971.6 530.0 973.1 534.3 974.7 537.0C976.5 540.1 978.2 548.0 980.0 548.0C981.7 548.0 983.3 543.1 985.0 541.0C986.6 539.0 988.1 535.5 989.7 535.5C991.1 535.5 992.6 544.9 994.0 548.0C995.7 551.6 997.3 556.5 999.0 556.5C1000.8 556.5 1002.6 551.0 1004.4 551.0C1006.1 551.0 1007.9 554.5 1009.6 556.5C1011.4 558.6 1013.2 563.5 1015.0 563.5C1017.3 563.5 1019.7 556.5 1022.0 556.5C1024.3 556.5 1026.7 565.0 1029.0 565.0C1031.3 565.0 1033.7 563.5 1036.0 563.5C1038.9 563.5 1041.7 570.5 1044.6 570.5C1046.9 570.5 1049.3 567.0 1051.6 567.0C1053.9 567.0 1056.3 569.0 1058.6 569.0C1060.4 569.0 1062.2 567.6 1064.0 566.0C1065.7 564.5 1067.3 560.1 1069.0 555.0C1070.0 551.9 1071.0 548.7 1072.0 541.0C1072.7 535.9 1073.3 517.7 1074.0 506.0C1075.0 488.4 1076.0 463.5 1077.0 453.0C1078.0 442.5 1079.0 433.6 1080.0 430.6C1080.8 428.2 1081.6 426.0 1082.4 426.0C1083.4 426.0 1084.5 436.6 1085.5 443.0C1086.8 451.0 1088.1 471.0 1089.4 471.0C1090.6 471.0 1091.8 449.9 1093.0 443.0C1094.0 437.2 1095.0 429.0 1096.0 429.0C1097.2 429.0 1098.3 441.9 1099.5 450.0C1100.3 455.8 1101.2 470.0 1102.0 470.0C1102.9 470.0 1103.8 437.5 1104.7 418.0C1105.6 397.8 1106.6 363.0 1107.5 348.5C1108.3 335.6 1109.2 320.0 1110.0 320.0C1111.0 320.0 1112.0 326.2 1113.0 334.5C1113.9 341.7 1114.7 374.9 1115.6 401.0C1116.4 425.0 1117.2 469.0 1118.0 488.0C1119.2 515.8 1120.3 541.3 1121.5 548.0C1122.7 554.7 1123.8 558.9 1125.0 560.0C1126.5 561.4 1128.1 562.4 1129.6 562.4C1130.7 562.4 1131.9 553.0 1133.0 541.0C1133.8 532.2 1134.7 497.0 1135.5 471.0C1136.3 445.0 1137.2 407.8 1138.0 383.0C1138.7 363.2 1139.3 344.9 1140.0 331.0C1140.7 317.1 1141.3 308.5 1142.0 296.0C1142.5 286.6 1143.0 272.4 1143.5 266.0C1144.0 259.6 1144.5 252.0 1145.0 252.0C1145.6 252.0 1146.1 259.6 1146.7 266.0C1147.3 272.4 1147.8 281.7 1148.4 296.0C1148.9 309.5 1149.5 345.2 1150.0 366.0C1150.7 392.0 1151.3 429.5 1152.0 436.0C1153.0 445.7 1154.0 452.0 1155.0 452.0C1155.7 452.0 1156.3 418.9 1157.0 411.0C1158.0 399.1 1159.0 387.0 1160.0 387.0C1160.8 387.0 1161.6 392.9 1162.4 401.0C1163.1 408.1 1163.8 449.6 1164.5 471.0C1165.3 496.4 1166.2 527.3 1167.0 541.0C1167.8 554.1 1168.6 567.0 1169.4 569.0C1170.9 572.8 1172.5 574.7 1174.0 574.7C1175.7 574.7 1177.3 574.4 1179.0 572.0" fill="none" stroke="#087a08" stroke-width="1.7" stroke-linejoin="round"/>
<path d="M12.0 572.0C18.3 572.0 24.7 567.7 31.0 562.0C36.7 556.9 42.3 535.2 48.0 513.0C54.0 489.4 60.0 442.0 66.0 401.0C70.7 369.1 75.3 342.4 80.0 296.0C83.3 262.9 86.7 203.1 90.0 156.0C93.6 105.1 97.2 4.3 100.8 2.0C101.2 1.7 101.6 1.5 102.0 1.5C108.3 1.5 114.7 1.5 121.0 1.5C121.4 1.5 121.8 1.7 122.2 2.0C124.1 3.3 126.1 89.8 128.0 126.0C130.0 163.5 132.0 201.6 134.0 226.0C136.5 256.5 139.0 297.0 141.5 297.0C144.0 297.0 146.5 242.8 149.0 206.0C151.0 176.6 153.0 128.1 155.0 96.0C157.2 60.7 159.4 3.5 161.6 2.0C162.0 1.7 162.4 1.5 162.8 1.5C164.3 1.5 165.7 1.5 167.2 1.5C167.6 1.5 168.0 1.7 168.4 2.0C170.6 3.5 172.8 96.8 175.0 156.0C176.5 196.4 178.0 256.9 179.5 296.0C181.3 343.7 183.2 386.8 185.0 418.0C187.3 457.7 189.7 503.1 192.0 513.0C195.3 527.2 198.7 532.2 202.0 537.0C206.2 543.0 210.3 547.4 214.5 549.5C218.0 551.2 221.5 553.0 225.0 553.0C229.0 553.0 233.0 544.2 237.0 534.0C240.7 524.6 244.3 486.6 248.0 464.0C250.8 446.5 253.7 413.0 256.5 413.0C259.3 413.0 262.2 444.0 265.0 464.0C268.0 485.1 271.0 525.7 274.0 541.0C276.3 552.9 278.7 565.6 281.0 567.0C286.0 570.1 291.0 570.2 296.0 571.5C300.7 572.7 305.3 574.7 310.0 574.7C316.3 574.7 322.7 574.7 329.0 574.7C330.8 574.7 332.7 564.4 334.5 555.0C336.3 545.6 338.2 519.6 340.0 506.0C341.7 493.6 343.3 476.7 345.0 474.0C346.0 472.4 347.0 471.0 348.0 471.0C349.3 471.0 350.7 478.9 352.0 485.0C353.7 492.7 355.3 511.4 357.0 520.0C358.8 529.5 360.7 538.2 362.5 542.5C363.7 545.2 364.8 548.5 366.0 548.5C368.3 548.5 370.7 544.6 373.0 541.0C375.9 536.5 378.8 526.2 381.7 516.0C384.0 507.8 386.4 493.0 388.7 485.0C390.5 479.0 392.2 471.6 394.0 470.0C394.9 469.2 395.8 468.4 396.7 468.4C398.1 468.4 399.6 475.5 401.0 481.0C402.7 487.4 404.3 503.2 406.0 509.0C407.6 514.5 409.1 521.0 410.7 521.0C412.1 521.0 413.6 514.0 415.0 506.0C416.3 498.6 417.7 471.9 419.0 453.0C420.5 431.3 422.1 403.4 423.6 383.0C425.1 363.5 426.5 339.7 428.0 331.0C429.3 323.1 430.7 317.0 432.0 315.0C433.9 312.2 435.7 312.9 437.6 310.0C438.7 308.2 439.9 300.5 441.0 296.0C443.0 288.0 445.0 273.0 447.0 273.0C448.5 273.0 450.1 283.3 451.6 296.0C452.7 305.4 453.9 343.3 455.0 366.0C456.2 390.0 457.4 417.9 458.6 436.0C459.7 453.1 460.9 473.6 462.0 478.0C462.8 481.2 463.7 484.0 464.5 484.0C465.7 484.0 466.8 468.2 468.0 453.0C469.0 440.0 470.0 408.9 471.0 383.0C472.0 357.1 473.0 323.3 474.0 296.0C475.2 264.1 476.3 225.4 477.5 206.0C478.7 186.6 479.8 163.0 481.0 163.0C482.2 163.0 483.3 188.4 484.5 206.0C486.0 228.6 487.5 257.1 489.0 296.0C490.0 321.9 491.0 371.4 492.0 401.0C493.0 430.6 494.0 464.6 495.0 478.0C496.3 495.8 497.7 505.8 499.0 513.0C500.0 518.4 501.0 523.4 502.0 525.0C503.8 527.9 505.7 530.0 507.5 530.0C509.8 530.0 512.2 528.5 514.5 527.0C516.3 525.8 518.2 524.7 520.0 520.0C521.0 517.4 522.0 490.9 523.0 471.0C524.3 444.4 525.7 402.2 527.0 366.0C527.8 343.4 528.7 314.3 529.5 296.0C530.3 277.7 531.2 259.8 532.0 251.0C533.0 240.4 534.0 229.0 535.0 229.0C536.0 229.0 537.0 241.1 538.0 251.0C539.0 260.9 540.0 271.9 541.0 296.0C541.5 308.0 542.0 348.1 542.5 366.0C543.3 395.8 544.2 423.0 545.0 436.0C545.7 446.4 546.3 458.0 547.0 458.0C548.2 458.0 549.3 444.7 550.5 436.0C551.7 427.3 552.8 406.7 554.0 404.0C555.0 401.7 556.0 400.0 557.0 400.0C558.2 400.0 559.5 409.5 560.7 418.0C562.1 427.9 563.6 455.6 565.0 471.0C566.5 486.8 567.9 505.7 569.4 513.0C570.9 520.7 572.5 526.0 574.0 528.5C576.3 532.2 578.7 533.0 581.0 535.5C584.0 538.7 587.0 546.0 590.0 546.0C592.0 546.0 594.0 544.9 596.0 544.0C598.3 542.9 600.7 539.0 603.0 539.0C605.6 539.0 608.1 547.0 610.7 547.0C613.4 547.0 616.0 538.8 618.7 537.0C620.5 535.8 622.2 534.5 624.0 534.5C625.2 534.5 626.3 537.0 627.5 537.0C629.2 537.0 631.0 532.0 632.7 532.0C634.5 532.0 636.2 537.0 638.0 537.0C639.7 537.0 641.3 527.9 643.0 523.0C644.8 517.7 646.6 508.6 648.4 506.0C649.9 503.8 651.5 501.6 653.0 501.6C654.7 501.6 656.3 512.3 658.0 516.0C659.7 519.7 661.3 525.0 663.0 525.0C664.6 525.0 666.1 520.0 667.7 520.0C669.5 520.0 671.2 527.9 673.0 530.0C674.7 532.0 676.3 534.5 678.0 534.5C680.3 534.5 682.7 525.0 685.0 525.0C686.6 525.0 688.1 528.5 689.7 528.5C690.8 528.5 691.9 516.9 693.0 506.0C694.2 493.7 695.5 463.3 696.7 436.0C697.8 411.6 698.9 367.1 700.0 348.5C701.2 327.6 702.5 310.6 703.7 303.0C704.5 298.3 705.2 293.0 706.0 293.0C706.7 293.0 707.3 306.8 708.0 317.0C709.1 334.3 710.3 382.1 711.4 394.0C712.3 403.1 713.1 412.4 714.0 412.4C714.9 412.4 715.7 397.2 716.6 383.0C717.4 369.9 718.2 330.4 719.0 313.5C719.3 306.5 719.7 300.9 720.0 296.0C720.8 283.8 721.7 272.0 722.5 266.0C723.3 260.0 724.2 253.0 725.0 253.0C725.7 253.0 726.3 260.0 727.0 266.0C727.7 272.0 728.3 282.6 729.0 296.0C729.9 314.1 730.8 354.8 731.7 383.0C732.5 407.0 733.2 438.8 734.0 453.0C735.2 475.3 736.4 490.1 737.6 499.0C739.1 509.9 740.5 517.7 742.0 521.5C743.3 524.9 744.7 528.5 746.0 528.5C747.9 528.5 749.7 520.9 751.6 516.0C753.4 511.3 755.2 504.0 757.0 499.0C758.7 494.4 760.3 490.8 762.0 486.6C763.7 482.4 765.3 474.0 767.0 474.0C768.7 474.0 770.3 485.8 772.0 492.0C773.3 497.0 774.7 505.9 776.0 507.5C777.7 509.5 779.3 509.9 781.0 511.0C782.9 512.2 784.7 512.6 786.6 514.5C788.1 516.0 789.5 524.1 791.0 525.0C793.0 526.2 795.0 526.4 797.0 527.0C798.7 527.5 800.3 527.6 802.0 528.5C803.8 529.5 805.7 541.0 807.5 541.0C808.7 541.0 809.8 529.8 811.0 523.0C812.5 514.1 814.1 497.6 815.6 492.0C817.1 486.7 818.5 481.0 820.0 481.0C821.3 481.0 822.7 490.6 824.0 495.0C825.5 499.9 827.0 509.0 828.5 509.0C830.3 509.0 832.2 506.0 834.0 506.0C835.7 506.0 837.3 515.1 839.0 520.0C840.5 524.5 842.1 534.0 843.6 534.0C845.2 534.0 846.8 533.0 848.4 533.0C849.9 533.0 851.5 540.3 853.0 544.0C854.7 548.1 856.3 556.5 858.0 556.5C860.2 556.5 862.3 547.3 864.5 544.0C866.3 541.2 868.2 537.0 870.0 537.0C872.0 537.0 874.0 542.8 876.0 544.0C877.7 545.0 879.3 544.9 881.0 546.0C882.7 547.1 884.3 553.3 886.0 555.0C887.8 556.9 889.7 559.0 891.5 559.0C893.0 559.0 894.5 559.0 896.0 559.0C897.2 559.0 898.3 565.0 899.5 567.0C901.2 570.0 903.0 573.7 904.7 574.0C907.0 574.5 909.4 574.7 911.7 574.7C914.0 574.7 916.4 572.0 918.7 572.0C921.0 572.0 923.4 574.0 925.7 574.0C928.0 574.0 930.4 572.2 932.7 570.5C934.1 569.4 935.6 568.4 937.0 565.0C937.9 562.9 938.8 553.6 939.7 541.0C940.5 530.3 941.2 493.9 942.0 471.0C943.0 441.1 944.0 408.8 945.0 383.0C945.9 359.8 946.8 331.1 947.7 320.5C948.5 311.5 949.2 302.0 950.0 302.0C950.7 302.0 951.3 303.8 952.0 306.5C952.8 309.8 953.6 354.5 954.4 383.0C955.3 413.8 956.1 462.9 957.0 488.0C958.0 517.0 959.0 545.6 960.0 555.0C961.2 566.0 962.3 575.5 963.5 575.5C964.9 575.5 966.3 569.5 967.7 565.0C969.1 560.4 970.6 547.2 972.0 546.0C973.5 544.8 974.9 544.0 976.4 544.0C977.6 544.0 978.8 555.0 980.0 555.0C981.7 555.0 983.3 553.0 985.0 553.0C986.6 553.0 988.1 553.0 989.7 553.0C990.5 553.0 991.2 545.3 992.0 537.0C992.9 527.6 993.7 500.5 994.6 471.0C995.3 447.2 996.0 397.5 996.7 366.0C997.3 340.5 997.8 316.2 998.4 296.0C999.3 265.2 1000.1 233.4 1001.0 216.0C1001.7 202.6 1002.3 185.5 1003.0 185.5C1003.7 185.5 1004.3 201.3 1005.0 216.0C1005.7 230.7 1006.3 271.2 1007.0 296.0C1007.9 328.3 1008.7 357.6 1009.6 386.0C1010.4 412.3 1011.2 446.1 1012.0 461.0C1012.7 473.4 1013.3 488.0 1014.0 488.0C1014.8 488.0 1015.7 473.4 1016.5 461.0C1017.5 446.1 1018.5 401.9 1019.5 386.0C1020.5 369.6 1021.6 350.0 1022.6 350.0C1023.7 350.0 1024.9 382.7 1026.0 401.0C1027.0 417.1 1028.0 441.0 1029.0 453.0C1029.9 463.8 1030.8 478.0 1031.7 478.0C1032.8 478.0 1033.9 448.9 1035.0 436.0C1036.2 421.5 1037.5 395.6 1038.7 395.6C1039.6 395.6 1040.6 407.1 1041.5 418.0C1042.5 430.1 1043.6 468.9 1044.6 488.0C1045.7 509.0 1046.9 532.0 1048.0 541.0C1049.2 550.5 1050.4 560.0 1051.6 560.0C1052.7 560.0 1053.9 537.8 1055.0 523.0C1056.2 507.3 1057.4 479.4 1058.6 464.0C1059.5 452.0 1060.5 437.1 1061.4 434.0C1061.9 432.2 1062.5 430.6 1063.0 430.6C1063.9 430.6 1064.7 438.5 1065.6 446.0C1066.5 454.1 1067.5 484.5 1068.4 492.0C1069.3 499.0 1070.1 506.0 1071.0 506.0C1072.0 506.0 1073.0 483.1 1074.0 478.0C1075.3 471.2 1076.7 464.5 1078.0 464.5C1079.0 464.5 1080.0 479.3 1081.0 485.0C1082.7 494.5 1084.3 509.0 1086.0 509.0C1087.1 509.0 1088.3 485.0 1089.4 478.0C1090.8 469.3 1092.2 458.6 1093.6 458.6C1094.7 458.6 1095.9 470.5 1097.0 478.0C1098.2 485.8 1099.3 499.5 1100.5 506.0C1101.7 512.5 1102.8 521.0 1104.0 521.0C1105.2 521.0 1106.3 501.8 1107.5 492.0C1108.7 482.2 1109.8 465.7 1111.0 462.0C1111.8 459.4 1112.7 457.0 1113.5 457.0C1114.3 457.0 1115.2 472.6 1116.0 478.0C1116.9 483.8 1117.8 492.0 1118.7 492.0C1119.6 492.0 1120.6 457.8 1121.5 436.0C1122.3 416.5 1123.2 383.3 1124.0 366.0C1125.0 345.2 1126.0 328.1 1127.0 317.0C1127.5 311.4 1128.0 303.7 1128.5 303.7C1129.2 303.7 1129.9 317.7 1130.6 331.0C1131.4 346.2 1132.2 392.7 1133.0 418.0C1133.8 444.4 1134.7 473.4 1135.5 488.0C1136.3 502.6 1137.2 516.6 1138.0 520.0C1139.5 526.1 1141.0 526.1 1142.5 530.0C1143.7 533.1 1144.8 536.5 1146.0 541.0C1147.2 545.5 1148.3 554.9 1149.5 558.0C1150.7 561.1 1151.8 564.5 1153.0 564.5C1154.2 564.5 1155.3 558.2 1156.5 555.0C1157.7 551.8 1158.8 545.0 1160.0 545.0C1161.2 545.0 1162.3 553.5 1163.5 558.0C1164.7 562.5 1165.8 572.0 1167.0 572.0C1168.2 572.0 1169.3 568.9 1170.5 567.0C1171.7 565.1 1172.8 560.0 1174.0 560.0C1175.0 560.0 1176.0 566.3 1177.0 569.0C1177.7 570.8 1178.3 572.5 1179.0 574.0" fill="none" stroke="#0a0a0a" stroke-width="1.7" stroke-linejoin="round"/>
<path d="M12.0 560.0C15.3 549.7 18.7 529.3 22.0 506.0C25.0 485.0 28.0 452.1 31.0 418.0C34.0 383.9 37.0 343.4 40.0 296.0C42.8 251.3 45.7 185.2 48.5 136.0C51.3 87.9 54.0 3.8 56.8 2.0C57.2 1.7 57.6 1.5 58.0 1.5C63.7 1.5 69.3 1.5 75.0 1.5C75.4 1.5 75.8 1.7 76.2 2.0C79.1 3.9 82.1 94.2 85.0 136.0C89.0 193.1 93.0 253.6 97.0 296.0C101.7 345.5 106.3 379.7 111.0 418.0C114.3 445.4 117.7 479.4 121.0 496.0C124.7 514.3 128.3 536.0 132.0 536.0C135.0 536.0 138.0 507.0 141.0 486.0C144.0 465.0 147.0 429.2 150.0 401.0C152.7 375.9 155.3 346.8 158.0 326.0C160.0 310.4 162.0 285.5 164.0 285.5C165.0 285.5 166.0 297.8 167.0 306.0C168.3 316.9 169.7 331.8 171.0 348.0C173.3 376.4 175.7 424.2 178.0 453.0C180.8 487.9 183.7 528.4 186.5 541.0C189.3 553.6 192.2 564.0 195.0 565.0C203.3 568.0 211.7 567.7 220.0 569.0C227.0 570.1 234.0 571.2 241.0 572.0C251.3 573.1 261.7 574.7 272.0 574.7C274.3 574.7 276.7 566.4 279.0 558.0C281.3 549.6 283.7 522.4 286.0 506.0C288.0 492.0 290.0 478.3 292.0 466.0C293.3 457.8 294.7 443.7 296.0 443.0C297.2 442.4 298.3 442.0 299.5 442.0C301.3 442.0 303.2 458.1 305.0 471.0C306.7 482.7 308.3 508.1 310.0 523.0C311.7 537.9 313.3 556.9 315.0 562.0C317.3 569.1 319.7 574.7 322.0 574.7C330.3 574.7 338.7 574.7 347.0 574.7C349.3 574.7 351.7 569.6 354.0 565.0C356.8 559.4 359.7 542.8 362.5 534.0C365.3 525.2 368.2 515.0 371.0 511.0C373.0 508.2 375.0 505.0 377.0 505.0C379.2 505.0 381.3 511.2 383.5 516.0C386.3 522.2 389.2 538.0 392.0 544.0C394.3 548.9 396.7 555.0 399.0 555.0C402.0 555.0 405.0 545.9 408.0 541.0C411.5 535.3 415.0 523.0 418.5 523.0C422.0 523.0 425.5 525.0 429.0 525.0C431.9 525.0 434.7 520.0 437.6 516.0C439.9 512.8 442.3 509.9 444.6 502.0C446.4 495.9 448.2 471.5 450.0 453.0C451.7 435.9 453.3 404.2 455.0 394.0C456.5 384.6 458.1 374.7 459.6 374.7C461.1 374.7 462.5 389.9 464.0 401.0C465.7 413.6 467.3 442.2 469.0 453.0C471.3 468.1 473.7 485.0 476.0 485.0C478.3 485.0 480.7 475.7 483.0 464.0C484.7 455.6 486.3 425.6 488.0 401.0C489.3 381.3 490.7 348.3 492.0 331.0C493.0 318.0 494.0 305.7 495.0 299.5C495.5 296.4 496.0 292.5 496.5 292.5C497.3 292.5 498.2 300.2 499.0 303.0C500.3 307.5 501.7 314.0 503.0 314.0C504.0 314.0 505.0 304.0 506.0 296.0C507.3 285.4 508.7 257.1 510.0 246.0C511.3 234.9 512.7 221.0 514.0 221.0C515.3 221.0 516.7 234.3 518.0 246.0C519.2 256.2 520.3 273.5 521.5 296.0C522.3 312.1 523.2 345.9 524.0 366.0C525.0 390.1 526.0 421.0 527.0 429.0C528.7 442.3 530.3 452.0 532.0 452.0C534.3 452.0 536.7 447.7 539.0 443.0C540.7 439.6 542.3 425.5 544.0 422.0C545.7 418.5 547.3 415.0 549.0 415.0C550.3 415.0 551.7 421.5 553.0 423.6C554.2 425.4 555.3 428.0 556.5 428.0C557.7 428.0 558.8 412.4 560.0 401.0C561.7 384.7 563.3 346.7 565.0 331.0C566.5 317.2 567.9 299.5 569.4 299.5C570.9 299.5 572.5 316.0 574.0 331.0C575.7 347.3 577.3 402.8 579.0 418.0C580.5 431.4 581.9 445.6 583.4 445.6C584.9 445.6 586.5 431.6 588.0 418.0C589.7 403.2 591.3 355.9 593.0 331.0C594.0 316.1 595.0 298.9 596.0 291.0C596.6 286.5 597.1 281.0 597.7 281.0C598.3 281.0 598.9 283.6 599.5 286.0C600.0 288.0 600.5 290.8 601.0 296.0C601.7 302.9 602.3 334.1 603.0 348.5C604.2 373.7 605.3 402.9 606.5 411.0C607.7 419.1 608.8 426.0 610.0 426.0C611.7 426.0 613.3 426.0 615.0 426.0C617.3 426.0 619.7 439.0 622.0 439.0C624.7 439.0 627.3 423.6 630.0 423.6C631.5 423.6 633.0 431.2 634.5 436.0C636.6 442.6 638.6 459.6 640.7 459.6C643.0 459.6 645.4 444.6 647.7 444.6C650.3 444.6 652.8 463.0 655.4 463.0C657.2 463.0 658.9 448.9 660.7 443.0C662.5 437.1 664.2 427.0 666.0 427.0C668.0 427.0 670.0 444.6 672.0 444.6C674.0 444.6 676.0 430.3 678.0 425.0C679.8 420.3 681.6 413.0 683.4 413.0C685.1 413.0 686.9 428.5 688.6 436.0C690.4 443.7 692.2 454.3 694.0 458.6C695.7 462.6 697.3 462.8 699.0 467.0C700.7 471.2 702.3 487.0 704.0 492.0C705.5 496.6 707.1 502.0 708.6 502.0C711.3 502.0 713.9 486.5 716.6 486.5C719.4 486.5 722.2 508.0 725.0 508.0C728.0 508.0 731.0 490.0 734.0 490.0C736.3 490.0 738.7 510.0 741.0 510.0C742.7 510.0 744.3 487.5 746.0 471.0C747.3 457.8 748.7 433.6 750.0 418.0C751.5 400.8 752.9 372.0 754.4 372.0C755.8 372.0 757.2 387.5 758.6 401.0C759.7 411.9 760.9 436.0 762.0 453.0C763.2 471.0 764.4 493.5 765.6 506.0C767.1 521.3 768.5 535.5 770.0 541.0C771.3 546.0 772.7 551.0 774.0 551.0C775.9 551.0 777.7 542.1 779.6 537.0C781.4 532.1 783.2 521.0 785.0 521.0C786.7 521.0 788.3 530.9 790.0 534.0C792.3 538.4 794.7 544.0 797.0 544.0C798.7 544.0 800.3 537.0 802.0 537.0C804.3 537.0 806.7 551.0 809.0 551.0C811.3 551.0 813.7 546.0 816.0 546.0C818.3 546.0 820.7 562.0 823.0 562.0C824.5 562.0 826.0 531.3 827.5 506.0C828.7 486.3 829.8 446.1 831.0 418.0C832.0 393.9 833.0 366.3 834.0 348.5C835.0 330.7 836.0 305.0 837.0 305.0C838.0 305.0 839.0 330.7 840.0 348.5C841.0 366.3 842.0 396.0 843.0 418.0C844.0 440.0 845.0 465.5 846.0 481.0C846.8 493.4 847.6 511.0 848.4 511.0C850.5 511.0 852.6 487.5 854.7 487.5C857.1 487.5 859.6 516.0 862.0 516.0C864.8 516.0 867.7 480.0 870.5 480.0C872.9 480.0 875.2 513.0 877.6 513.0C879.3 513.0 881.0 481.8 882.7 471.0C884.0 462.5 885.4 450.0 886.7 450.0C888.3 450.0 889.9 467.2 891.5 478.0C892.6 485.4 893.7 504.0 894.8 504.0C896.2 504.0 897.6 492.5 899.0 486.0C900.4 479.4 901.9 464.5 903.3 464.5C904.5 464.5 905.8 481.2 907.0 488.0C908.7 497.2 910.3 512.0 912.0 512.0C913.3 512.0 914.7 497.0 916.0 491.0C917.2 485.6 918.4 476.7 919.6 476.7C921.1 476.7 922.5 497.9 924.0 506.0C925.7 515.2 927.3 529.6 929.0 529.6C930.6 529.6 932.1 518.4 933.7 513.0C934.8 509.2 935.9 502.0 937.0 502.0C938.5 502.0 940.0 515.2 941.5 520.0C943.0 524.8 944.5 532.0 946.0 532.0C947.7 532.0 949.3 518.0 951.0 518.0C953.0 518.0 955.0 531.6 957.0 537.0C958.6 541.2 960.1 548.0 961.7 548.0C963.1 548.0 964.6 544.0 966.0 544.0C967.7 544.0 969.3 551.6 971.0 555.0C972.2 557.5 973.5 562.0 974.7 562.0C975.5 562.0 976.2 526.3 977.0 506.0C978.0 479.5 979.0 445.4 980.0 418.0C980.9 393.4 981.8 365.6 982.7 348.5C983.5 333.9 984.2 317.5 985.0 313.5C985.7 310.0 986.3 307.0 987.0 307.0C987.8 307.0 988.6 322.7 989.4 338.0C990.3 354.6 991.1 407.5 992.0 436.0C993.0 468.9 994.0 507.4 995.0 523.0C996.0 538.6 997.0 552.9 998.0 555.0C999.5 558.2 1001.1 560.0 1002.6 560.0C1004.4 560.0 1006.2 556.5 1008.0 556.5C1010.3 556.5 1012.7 565.0 1015.0 565.0C1016.7 565.0 1018.3 553.0 1020.0 553.0C1022.3 553.0 1024.7 567.0 1027.0 569.0C1028.8 570.6 1030.6 572.0 1032.4 572.0C1033.6 572.0 1034.8 566.2 1036.0 562.0C1037.7 556.1 1039.3 547.7 1041.0 537.0C1042.2 529.3 1043.4 519.3 1044.6 506.0C1045.7 493.4 1046.9 468.1 1048.0 453.0C1049.2 437.0 1050.4 417.5 1051.6 411.0C1052.7 404.9 1053.9 399.0 1055.0 399.0C1056.0 399.0 1057.0 415.0 1058.0 429.0C1059.0 443.0 1060.0 479.8 1061.0 499.0C1062.0 518.2 1063.0 538.2 1064.0 548.0C1065.0 557.8 1066.0 569.0 1067.0 569.0C1068.5 569.0 1070.0 564.9 1071.5 563.5C1072.7 562.4 1073.8 560.7 1075.0 560.7C1076.5 560.7 1078.1 570.4 1079.6 572.0C1081.4 573.9 1083.2 575.5 1085.0 575.5C1086.7 575.5 1088.3 574.8 1090.0 574.0C1091.7 573.2 1093.3 569.0 1095.0 569.0C1096.8 569.0 1098.7 574.5 1100.5 574.7C1108.0 575.3 1115.5 575.5 1123.0 575.5C1131.3 575.5 1139.7 575.3 1148.0 574.7C1150.3 574.5 1152.7 570.5 1155.0 570.5C1156.7 570.5 1158.3 574.7 1160.0 574.7C1164.0 574.7 1168.0 574.7 1172.0 574.7C1174.3 574.7 1176.7 573.2 1179.0 572.0" fill="none" stroke="#ff1a1a" stroke-width="1.7" stroke-linejoin="round"/>
<path d="M12.0 400.0C14.3 393.0 16.7 391.0 19.0 391.0C21.3 391.0 23.7 399.7 26.0 406.0C28.7 413.2 31.3 427.9 34.0 436.0C37.0 445.2 40.0 459.0 43.0 459.0C45.7 459.0 48.3 443.4 51.0 431.0C53.7 418.6 56.3 396.6 59.0 376.0C62.0 352.8 65.0 313.2 68.0 296.0C69.3 288.4 70.7 279.5 72.0 278.0C73.0 276.9 74.0 276.0 75.0 276.0C76.0 276.0 77.0 280.2 78.0 284.0C78.7 286.5 79.3 291.0 80.0 296.0C83.3 320.8 86.7 383.5 90.0 416.0C93.7 451.8 97.3 487.7 101.0 506.0C105.7 529.3 110.3 552.8 115.0 555.0C122.0 558.3 129.0 558.8 136.0 560.0C143.0 561.2 150.0 563.0 157.0 563.0C160.3 563.0 163.7 542.9 167.0 526.0C170.7 507.4 174.3 479.9 178.0 436.0C180.3 408.0 182.7 335.9 185.0 296.0C187.0 261.8 189.0 233.8 191.0 206.0C192.7 182.8 194.3 154.3 196.0 141.0C197.0 133.0 198.0 123.0 199.0 123.0C200.0 123.0 201.0 133.0 202.0 141.0C203.7 154.3 205.3 182.8 207.0 206.0C209.0 233.8 211.0 256.6 213.0 296.0C214.7 328.9 216.3 402.9 218.0 436.0C220.3 482.4 222.7 529.1 225.0 541.0C228.0 556.3 231.0 567.7 234.0 567.7C242.0 567.7 250.0 565.8 258.0 564.5C264.0 563.5 270.0 563.3 276.0 560.7C279.3 559.2 282.7 538.7 286.0 520.0C289.3 501.3 292.7 469.3 296.0 429.0C298.6 398.0 301.1 338.9 303.7 296.0C305.1 272.0 306.6 244.2 308.0 226.0C309.0 213.3 310.0 199.5 311.0 194.0C312.0 188.5 313.0 183.0 314.0 183.0C315.0 183.0 316.0 188.5 317.0 194.0C318.0 199.5 319.0 211.4 320.0 226.0C321.0 240.6 322.0 270.1 323.0 296.0C324.0 321.9 325.0 357.1 326.0 383.0C327.0 408.9 328.0 436.7 329.0 453.0C330.3 474.7 331.7 494.3 333.0 502.0C334.3 509.7 335.7 517.0 337.0 517.0C340.3 517.0 343.7 507.4 347.0 502.0C351.0 495.5 355.0 480.6 359.0 480.6C362.0 480.6 365.0 496.8 368.0 502.0C371.3 507.8 374.7 514.8 378.0 515.6C381.6 516.5 385.1 517.0 388.7 517.0C391.5 517.0 394.2 511.5 397.0 509.0C400.0 506.3 403.0 501.6 406.0 501.6C409.5 501.6 413.1 501.7 416.6 502.0C419.4 502.2 422.2 511.4 425.0 516.0C428.7 522.1 432.3 530.4 436.0 534.0C439.3 537.2 442.7 541.0 446.0 541.0C448.3 541.0 450.7 538.9 453.0 537.0C456.0 534.5 459.0 526.1 462.0 523.0C463.7 521.3 465.3 519.0 467.0 519.0C470.7 519.0 474.3 522.8 478.0 525.0C482.7 527.7 487.3 532.2 492.0 534.0C496.7 535.8 501.3 538.0 506.0 538.0C508.8 538.0 511.7 535.7 514.5 534.0C518.7 531.6 522.8 524.0 527.0 524.0C530.3 524.0 533.7 527.3 537.0 530.0C540.7 533.0 544.3 539.4 548.0 544.0C551.3 548.2 554.7 554.1 558.0 556.5C562.7 559.9 567.3 562.1 572.0 563.5C575.7 564.6 579.3 566.0 583.0 566.0C587.3 566.0 591.7 560.7 596.0 560.7C598.3 560.7 600.7 562.2 603.0 563.5C606.0 565.2 609.0 570.9 612.0 572.0C616.0 573.5 620.0 574.7 624.0 574.7C626.3 574.7 628.7 570.6 631.0 569.0C633.3 567.4 635.7 565.0 638.0 565.0C641.5 565.0 644.9 569.3 648.4 571.0C651.3 572.4 654.1 574.7 657.0 574.7C658.6 574.7 660.1 567.4 661.7 558.0C662.8 551.4 663.9 518.6 665.0 506.0C666.5 489.1 667.9 472.1 669.4 467.0C670.6 462.8 671.8 459.0 673.0 459.0C674.1 459.0 675.3 468.7 676.4 478.0C677.6 487.8 678.8 521.1 680.0 534.0C681.1 546.2 682.3 558.0 683.4 562.0C685.1 568.1 686.9 573.0 688.6 573.0C692.7 573.0 696.9 573.0 701.0 573.0C706.2 573.0 711.4 574.7 716.6 574.7C718.9 574.7 721.3 568.2 723.6 565.0C726.5 561.0 729.5 555.1 732.4 553.0C734.7 551.3 737.1 551.5 739.4 549.5C741.1 548.0 742.9 540.4 744.6 537.0C746.1 534.1 747.5 529.6 749.0 529.6C750.3 529.6 751.7 534.7 753.0 537.0C754.5 539.5 756.0 544.0 757.5 544.0C758.7 544.0 759.8 539.7 761.0 534.0C762.0 529.1 763.0 504.3 764.0 488.0C765.0 471.7 766.0 450.5 767.0 436.0C768.3 416.7 769.7 396.3 771.0 387.0C772.2 378.4 773.5 368.7 774.7 368.7C775.8 368.7 776.9 381.8 778.0 394.0C779.0 405.1 780.0 436.5 781.0 453.0C782.3 475.0 783.7 495.2 785.0 509.0C786.0 519.3 787.0 534.0 788.0 534.0C789.3 534.0 790.7 520.7 792.0 506.0C793.0 494.9 794.0 456.1 795.0 436.0C796.3 409.2 797.7 383.1 799.0 366.0C800.0 353.2 801.0 335.0 802.0 335.0C803.0 335.0 804.0 367.1 805.0 383.0C806.3 404.2 807.7 446.0 809.0 446.0C810.3 446.0 811.7 418.9 813.0 401.0C814.0 387.6 815.0 356.2 816.0 352.0C816.8 348.6 817.6 346.0 818.4 346.0C819.4 346.0 820.5 367.6 821.5 383.0C822.7 400.4 823.8 433.8 825.0 453.0C826.2 472.2 827.3 494.7 828.5 502.0C830.3 513.5 832.2 517.1 834.0 523.0C835.7 528.4 837.3 534.4 839.0 537.0C840.2 538.8 841.3 541.0 842.5 541.0C843.3 541.0 844.2 521.6 845.0 506.0C846.0 487.2 847.0 447.2 848.0 418.0C849.0 388.8 850.0 352.5 851.0 331.0C851.7 316.7 852.3 300.4 853.0 296.0C854.0 289.4 855.0 284.5 856.0 284.5C856.5 284.5 857.0 290.0 857.5 296.0C858.3 305.9 859.2 364.7 860.0 383.0C861.5 415.2 862.9 450.0 864.4 450.0C865.8 450.0 867.3 406.1 868.7 394.0C869.8 384.7 870.9 373.0 872.0 373.0C873.3 373.0 874.7 402.1 876.0 418.0C877.0 430.0 878.0 456.0 879.0 456.0C880.5 456.0 881.9 425.8 883.4 415.0C884.5 406.9 885.6 394.5 886.7 394.5C887.9 394.5 889.2 417.4 890.4 429.0C891.7 441.5 893.1 467.0 894.4 467.0C895.9 467.0 897.5 417.0 899.0 401.0C900.2 388.8 901.3 371.8 902.5 371.8C903.7 371.8 904.8 398.2 906.0 408.0C907.5 420.9 909.1 440.0 910.6 440.0C911.6 440.0 912.5 405.1 913.5 394.0C914.9 377.9 916.3 357.0 917.7 357.0C918.8 357.0 919.9 387.0 921.0 401.0C922.7 422.2 924.3 461.5 926.0 461.5C927.3 461.5 928.7 414.1 930.0 401.0C931.3 387.9 932.7 372.0 934.0 372.0C935.0 372.0 936.0 400.1 937.0 418.0C938.1 438.3 939.3 474.0 940.4 492.0C941.6 511.1 942.8 531.2 944.0 537.0C945.2 542.9 946.5 548.0 947.7 548.0C949.1 548.0 950.6 544.7 952.0 541.0C953.3 537.5 954.7 526.0 956.0 516.0C957.6 504.2 959.1 492.1 960.7 471.0C961.8 456.2 962.9 410.5 964.0 401.0C965.5 388.3 966.9 378.0 968.4 378.0C969.4 378.0 970.5 401.5 971.5 418.0C972.7 436.6 973.8 472.3 975.0 492.0C976.2 511.7 977.3 535.3 978.5 541.0C980.1 549.0 981.8 555.0 983.4 555.0C985.7 555.0 988.1 551.0 990.4 551.0C992.7 551.0 995.1 555.0 997.4 555.0C999.1 555.0 1000.9 543.2 1002.6 534.0C1003.7 528.0 1004.9 512.1 1006.0 509.0C1007.2 505.7 1008.4 503.0 1009.6 503.0C1011.1 503.0 1012.5 514.3 1014.0 520.0C1015.5 525.7 1016.9 537.0 1018.4 537.0C1019.6 537.0 1020.8 529.4 1022.0 527.0C1023.1 524.7 1024.3 521.5 1025.4 521.5C1027.1 521.5 1028.9 532.5 1030.6 537.0C1032.4 541.7 1034.2 549.5 1036.0 549.5C1037.3 549.5 1038.7 534.0 1040.0 534.0C1041.5 534.0 1043.1 544.0 1044.6 548.0C1046.4 552.6 1048.2 560.0 1050.0 560.0C1051.7 560.0 1053.3 550.3 1055.0 541.0C1056.2 534.3 1057.4 520.4 1058.6 506.0C1059.7 492.4 1060.9 471.1 1062.0 453.0C1063.2 433.8 1064.4 411.9 1065.6 394.0C1066.5 380.1 1067.5 359.5 1068.4 355.4C1069.3 351.6 1070.1 348.5 1071.0 348.5C1071.9 348.5 1072.7 363.8 1073.6 376.0C1074.5 389.2 1075.5 413.7 1076.4 436.0C1077.3 456.7 1078.1 490.9 1079.0 506.0C1080.0 523.4 1081.0 539.8 1082.0 544.0C1083.5 550.5 1085.1 555.0 1086.6 555.0C1088.4 555.0 1090.2 553.7 1092.0 553.7C1093.7 553.7 1095.3 559.9 1097.0 562.0C1098.7 564.1 1100.3 567.0 1102.0 567.0C1103.8 567.0 1105.7 563.5 1107.5 563.5C1109.3 563.5 1111.2 572.0 1113.0 572.0C1115.3 572.0 1117.7 568.1 1120.0 565.0C1121.3 563.2 1122.7 557.5 1124.0 557.5C1125.5 557.5 1127.0 572.0 1128.5 572.0C1131.3 572.0 1134.2 569.0 1137.0 569.0C1139.3 569.0 1141.7 574.7 1144.0 574.7C1149.9 574.7 1155.8 574.7 1161.7 574.7C1162.8 574.7 1163.9 567.2 1165.0 558.0C1166.0 549.6 1167.0 507.9 1168.0 488.0C1169.0 468.1 1170.0 444.2 1171.0 436.0C1172.0 427.8 1173.0 420.0 1174.0 420.0C1175.0 420.0 1176.0 435.9 1177.0 453.0C1177.7 464.4 1178.3 491.7 1179.0 520.0" fill="none" stroke="#2a62ee" stroke-width="1.7" stroke-linejoin="round"/>
<rect x="10.3" y="615.2" width="8.8" height="6.0" fill="#a2a4a2"/>
<rect x="23.9" y="618.7" width="8.8" height="2.5" fill="#a2a4a2"/>
<rect x="57.4" y="618.7" width="8.8" height="2.5" fill="#a2a4a2"/>
<rect x="71.2" y="618.7" width="8.8" height="2.5" fill="#a2a4a2"/>
<rect x="101.4" y="618.7" width="8.8" height="2.5" fill="#a2a4a2"/>
<rect x="107.8" y="618.7" width="8.8" height="2.5" fill="#a2a4a2"/>
<rect x="139.8" y="618.7" width="8.8" height="2.5" fill="#a2a4a2"/>
<rect x="160.6" y="617.2" width="8.8" height="4.0" fill="#a2a4a2"/>
<rect x="192.2" y="617.2" width="8.8" height="4.0" fill="#a2a4a2"/>
<rect x="213.6" y="618.7" width="8.8" height="2.5" fill="#a2a4a2"/>
<rect x="252.1" y="618.7" width="8.8" height="2.5" fill="#a2a4a2"/>
<rect x="276.6" y="616.2" width="8.8" height="5.0" fill="#a2a4a2"/>
<rect x="293.0" y="618.7" width="8.8" height="2.5" fill="#a2a4a2"/>
<rect x="308.9" y="606.2" width="8.8" height="15.0" fill="#a2a4a2"/>
<rect x="320.1" y="615.2" width="8.8" height="6.0" fill="#a2a4a2"/>
<rect x="343.2" y="616.2" width="8.8" height="5.0" fill="#a2a4a2"/>
<rect x="365.1" y="607.2" width="8.8" height="14.0" fill="#a2a4a2"/>
<rect x="391.4" y="618.4" width="8.8" height="2.8" fill="#a2a4a2"/>
<rect x="404.6" y="614.0" width="8.8" height="7.2" fill="#a2a4a2"/>
<rect x="426.2" y="608.4" width="8.8" height="12.8" fill="#a2a4a2"/>
<rect x="441.8" y="606.2" width="8.8" height="15.0" fill="#a2a4a2"/>
<rect x="454.0" y="614.0" width="8.8" height="7.2" fill="#a2a4a2"/>
<rect x="475.2" y="602.8" width="8.8" height="18.4" fill="#a2a4a2"/>
<rect x="490.8" y="607.2" width="8.8" height="14.0" fill="#a2a4a2"/>
<rect x="508.6" y="604.0" width="8.8" height="17.2" fill="#a2a4a2"/>
<rect x="530.6" y="607.2" width="8.8" height="14.0" fill="#a2a4a2"/>
<rect x="551.6" y="616.2" width="8.8" height="5.0" fill="#a2a4a2"/>
<rect x="565.1" y="607.2" width="8.8" height="14.0" fill="#a2a4a2"/>
<rect x="579.1" y="608.4" width="8.8" height="12.8" fill="#a2a4a2"/>
<rect x="592.6" y="611.8" width="8.8" height="9.4" fill="#a2a4a2"/>
<rect x="608.1" y="611.8" width="8.8" height="9.4" fill="#a2a4a2"/>
<rect x="625.9" y="617.5" width="8.8" height="3.7" fill="#a2a4a2"/>
<rect x="635.9" y="617.5" width="8.8" height="3.7" fill="#a2a4a2"/>
<rect x="650.6" y="615.2" width="8.8" height="6.0" fill="#a2a4a2"/>
<rect x="668.6" y="617.5" width="8.8" height="3.7" fill="#a2a4a2"/>
<rect x="678.9" y="617.5" width="8.8" height="3.7" fill="#a2a4a2"/>
<rect x="699.9" y="611.8" width="8.8" height="9.4" fill="#a2a4a2"/>
<rect x="719.2" y="608.4" width="8.8" height="12.8" fill="#a2a4a2"/>
<rect x="738.2" y="610.6" width="8.8" height="10.6" fill="#a2a4a2"/>
<rect x="750.6" y="615.2" width="8.8" height="6.0" fill="#a2a4a2"/>
<rect x="768.6" y="604.0" width="8.8" height="17.2" fill="#a2a4a2"/>
<rect x="781.6" y="612.8" width="8.8" height="8.4" fill="#a2a4a2"/>
<rect x="796.6" y="602.8" width="8.8" height="18.4" fill="#a2a4a2"/>
<rect x="813.4" y="608.4" width="8.8" height="12.8" fill="#a2a4a2"/>
<rect x="831.6" y="610.6" width="8.8" height="10.6" fill="#a2a4a2"/>
<rect x="850.2" y="611.8" width="8.8" height="9.4" fill="#a2a4a2"/>
<rect x="865.8" y="614.0" width="8.8" height="7.2" fill="#555a58"/>
<rect x="881.4" y="612.8" width="8.8" height="8.4" fill="#a2a4a2"/>
<rect x="897.6" y="608.4" width="8.8" height="12.8" fill="#a2a4a2"/>
<rect x="912.0" y="609.3" width="8.8" height="11.9" fill="#a2a4a2"/>
<rect x="927.6" y="610.6" width="8.8" height="10.6" fill="#a2a4a2"/>
<rect x="946.0" y="608.4" width="8.8" height="12.8" fill="#a2a4a2"/>
<rect x="962.6" y="606.2" width="8.8" height="15.0" fill="#a2a4a2"/>
<rect x="981.3" y="600.6" width="8.8" height="20.6" fill="#a2a4a2"/>
<rect x="997.6" y="599.4" width="8.8" height="21.8" fill="#a2a4a2"/>
<rect x="1016.6" y="609.3" width="8.8" height="11.9" fill="#a2a4a2"/>
<rect x="1035.0" y="612.8" width="8.8" height="8.4" fill="#a2a4a2"/>
<rect x="1049.9" y="612.8" width="8.8" height="8.4" fill="#a2a4a2"/>
<rect x="1065.6" y="614.0" width="8.8" height="7.2" fill="#a2a4a2"/>
<rect x="1077.4" y="616.2" width="8.8" height="5.0" fill="#a2a4a2"/>
<rect x="1091.1" y="615.2" width="8.8" height="6.0" fill="#a2a4a2"/>
<rect x="1107.0" y="608.4" width="8.8" height="12.8" fill="#a2a4a2"/>
<rect x="1123.9" y="605.0" width="8.8" height="16.2" fill="#a2a4a2"/>
<rect x="1140.4" y="604.0" width="8.8" height="17.2" fill="#a2a4a2"/>
<rect x="1155.1" y="607.2" width="8.8" height="14.0" fill="#a2a4a2"/>
<rect x="1168.8" y="593.7" width="8.8" height="27.5" fill="#a2a4a2"/>
<rect x="10" y="620.8" width="1169.5" height="1.2" fill="#b4b8b4"/>
<path transform="translate(346.5 387.4)" d="M0 7C-3 4.5-9 .5-9-4C-9-8.6-3-9.6 0-5.4C3-9.6 9-8.6 9-4C9 .5 3 4.5 0 7Z" fill="#838383" opacity=".92" filter="url(#bl)"/>
<path transform="translate(862.3 387.4)" d="M0 7C-3 4.5-9 .5-9-4C-9-8.6-3-9.6 0-5.4C3-9.6 9-8.6 9-4C9 .5 3 4.5 0 7Z" fill="#838383" opacity=".92" filter="url(#bl)"/>
<filter id="bl"><feGaussianBlur stdDeviation=".9"/></filter>
</svg>
    <svg class="txt" width="1179.5" height="636.5" font-family="Liberation Sans, sans-serif" font-size="14.3" text-anchor="middle" stroke-width=".6"><text transform="translate(14.7 18.4) scale(.8 1)" fill="#2a62ee" stroke="#2a62ee">C</text><text transform="translate(28.3 18.4) scale(.8 1)" fill="#2a62ee" stroke="#2a62ee">C</text><text transform="translate(61.8 18.4) scale(.8 1)" fill="#0a7d0a" stroke="#0a7d0a">A</text><text transform="translate(75.6 18.4) scale(.8 1)" fill="#2a62ee" stroke="#2a62ee">C</text><text transform="translate(105.8 18.4) scale(.8 1)" fill="#111111" stroke="#111111">G</text><text transform="translate(112.2 18.4) scale(.8 1)" fill="#111111" stroke="#111111">G</text><text transform="translate(144.2 18.4) scale(.8 1)" fill="#0a7d0a" stroke="#0a7d0a">A</text><text transform="translate(165.0 18.4) scale(.8 1)" fill="#111111" stroke="#111111">G</text><text transform="translate(196.6 18.4) scale(.8 1)" fill="#0a7d0a" stroke="#0a7d0a">A</text><text transform="translate(218.0 18.4) scale(.8 1)" fill="#0a7d0a" stroke="#0a7d0a">A</text><text transform="translate(256.5 18.4) scale(.8 1)" fill="#111111" stroke="#111111">G</text><text transform="translate(281.0 18.4) scale(.8 1)" fill="#0a7d0a" stroke="#0a7d0a">A</text><text transform="translate(297.4 18.4) scale(.8 1)" fill="#f01818" stroke="#f01818">T</text><text transform="translate(313.3 18.4) scale(.8 1)" fill="#2a62ee" stroke="#2a62ee">C</text><text transform="translate(324.5 18.4) scale(.8 1)" fill="#0a7d0a" stroke="#0a7d0a">A</text><text transform="translate(347.6 18.4) scale(.8 1)" fill="#111111" stroke="#111111">G</text><text transform="translate(369.5 18.4) scale(.8 1)" fill="#0a7d0a" stroke="#0a7d0a">A</text><text transform="translate(395.8 18.4) scale(.8 1)" fill="#111111" stroke="#111111">G</text><text transform="translate(409.0 18.4) scale(.8 1)" fill="#0a7d0a" stroke="#0a7d0a">A</text><text transform="translate(430.6 18.4) scale(.8 1)" fill="#111111" stroke="#111111">G</text><text transform="translate(446.2 18.4) scale(.8 1)" fill="#111111" stroke="#111111">G</text><text transform="translate(458.4 18.4) scale(.8 1)" fill="#f01818" stroke="#f01818">T</text><text transform="translate(479.6 18.4) scale(.8 1)" fill="#111111" stroke="#111111">G</text><text transform="translate(495.2 18.4) scale(.8 1)" fill="#f01818" stroke="#f01818">T</text><text transform="translate(513.0 18.4) scale(.8 1)" fill="#f01818" stroke="#f01818">T</text><text transform="translate(535.0 18.4) scale(.8 1)" fill="#111111" stroke="#111111">G</text><text transform="translate(556.0 18.4) scale(.8 1)" fill="#111111" stroke="#111111">G</text><text transform="translate(569.5 18.4) scale(.8 1)" fill="#f01818" stroke="#f01818">T</text><text transform="translate(583.5 18.4) scale(.8 1)" fill="#0a7d0a" stroke="#0a7d0a">A</text><text transform="translate(597.0 18.4) scale(.8 1)" fill="#f01818" stroke="#f01818">T</text><text transform="translate(612.5 18.4) scale(.8 1)" fill="#0a7d0a" stroke="#0a7d0a">A</text><text transform="translate(630.3 18.4) scale(.8 1)" fill="#f01818" stroke="#f01818">T</text><text transform="translate(640.3 18.4) scale(.8 1)" fill="#0a7d0a" stroke="#0a7d0a">A</text><text transform="translate(655.0 18.4) scale(.8 1)" fill="#0a7d0a" stroke="#0a7d0a">A</text><text transform="translate(673.0 18.4) scale(.8 1)" fill="#2a62ee" stroke="#2a62ee">C</text><text transform="translate(683.3 18.4) scale(.8 1)" fill="#0a7d0a" stroke="#0a7d0a">A</text><text transform="translate(704.3 18.4) scale(.8 1)" fill="#111111" stroke="#111111">G</text><text transform="translate(723.6 18.4) scale(.8 1)" fill="#111111" stroke="#111111">G</text><text transform="translate(742.6 18.4) scale(.8 1)" fill="#0a7d0a" stroke="#0a7d0a">A</text><text transform="translate(755.0 18.4) scale(.8 1)" fill="#f01818" stroke="#f01818">T</text><text transform="translate(773.0 18.4) scale(.8 1)" fill="#2a62ee" stroke="#2a62ee">C</text><text transform="translate(786.0 18.4) scale(.8 1)" fill="#0a7d0a" stroke="#0a7d0a">A</text><text transform="translate(801.0 18.4) scale(.8 1)" fill="#2a62ee" stroke="#2a62ee">C</text><text transform="translate(817.8 18.4) scale(.8 1)" fill="#2a62ee" stroke="#2a62ee">C</text><text transform="translate(836.0 18.4) scale(.8 1)" fill="#f01818" stroke="#f01818">T</text><text transform="translate(854.6 18.4) scale(.8 1)" fill="#2a62ee" stroke="#2a62ee">C</text><text transform="translate(870.2 18.4) scale(.8 1)" fill="#2a62ee" stroke="#2a62ee" style="font-weight:bold">C</text><text transform="translate(885.8 18.4) scale(.8 1)" fill="#2a62ee" stroke="#2a62ee">C</text><text transform="translate(902.0 18.4) scale(.8 1)" fill="#2a62ee" stroke="#2a62ee">C</text><text transform="translate(916.4 18.4) scale(.8 1)" fill="#2a62ee" stroke="#2a62ee">C</text><text transform="translate(932.0 18.4) scale(.8 1)" fill="#2a62ee" stroke="#2a62ee">C</text><text transform="translate(950.4 18.4) scale(.8 1)" fill="#111111" stroke="#111111">G</text><text transform="translate(967.0 18.4) scale(.8 1)" fill="#2a62ee" stroke="#2a62ee">C</text><text transform="translate(985.7 18.4) scale(.8 1)" fill="#f01818" stroke="#f01818">T</text><text transform="translate(1002.0 18.4) scale(.8 1)" fill="#111111" stroke="#111111">G</text><text transform="translate(1021.0 18.4) scale(.8 1)" fill="#111111" stroke="#111111">G</text><text transform="translate(1039.4 18.4) scale(.8 1)" fill="#111111" stroke="#111111">G</text><text transform="translate(1054.3 18.4) scale(.8 1)" fill="#f01818" stroke="#f01818">T</text><text transform="translate(1070.0 18.4) scale(.8 1)" fill="#2a62ee" stroke="#2a62ee">C</text><text transform="translate(1081.8 18.4) scale(.8 1)" fill="#0a7d0a" stroke="#0a7d0a">A</text><text transform="translate(1095.5 18.4) scale(.8 1)" fill="#0a7d0a" stroke="#0a7d0a">A</text><text transform="translate(1111.4 18.4) scale(.8 1)" fill="#0a7d0a" stroke="#0a7d0a">A</text><text transform="translate(1128.3 18.4) scale(.8 1)" fill="#111111" stroke="#111111">G</text><text transform="translate(1144.8 18.4) scale(.8 1)" fill="#0a7d0a" stroke="#0a7d0a">A</text><text transform="translate(1159.5 18.4) scale(.8 1)" fill="#0a7d0a" stroke="#0a7d0a">A</text><text transform="translate(1173.2 18.4) scale(.8 1)" fill="#2a62ee" stroke="#2a62ee">C</text><g font-family="DejaVu Sans, sans-serif" font-size="9" fill="#3a3a3a"><text x="14.7" y="632.0">1</text><text x="218.0" y="632.0">10</text><text x="430.6" y="632.0">20</text><text x="597.0" y="632.0">30</text><text x="755.0" y="632.0">40</text><text x="916.4" y="632.0">50</text><text x="1081.8" y="632.0">60</text></g></svg>
    <div id="tip" class="abs"><b>C47</b><span>峰高： 805&nbsp; &nbsp;质量： 12</span></div>
  </div>
  <div id="circ" class="abs"><svg width="24" height="24" viewBox="-.5 -.5 24 24" fill="none" stroke="#9a9ca4" stroke-width="1.2"><path d="M6.5 6.5V16.5M9 11.5H17M14 8.5L17 11.5L14 14.5"/></svg></div>
  <div id="scroll" class="abs"></div>
  <div id="thumb" class="abs"></div>
  <div id="tool" class="abs"></div>
  <div id="fit" class="abs"><svg width="21" height="20" viewBox="0 0 21 20" fill="none" stroke="#fff" stroke-width="1.2"><path d="M10.5 6.5C9 4.3 7.7 3.6 6.6 3.6C5 3.6 4 4.8 4 6.5S5 9.4 6.6 9.4C7.7 9.4 9 8.7 10.5 6.5C12 4.3 13.3 3.6 14.4 3.6C16 3.6 17 4.8 17 6.5S16 9.4 14.4 9.4C13.3 9.4 12 8.7 10.5 6.5Z"/><path d="M3.5 14.5H17.5M6 12.3L3.3 14.5L6 16.7M15 12.3L17.7 14.5L15 16.7" stroke-width="1.3"/></svg></div>
  <div id="seg1" class="abs seg">标准</div>
  <div id="seg2" class="abs seg">自动缩放的</div>
  <div id="cdata" class="abs seg">Chromatogram Data</div>
  <div id="chk" class="abs"><svg width="13.5" height="13.5" viewBox="0 0 13.5 13.5" fill="none" stroke="#fff" stroke-width="1.8" stroke-linecap="round" stroke-linejoin="round"><path d="M3.3 7.2L5.8 9.8L10.3 3.6"/></svg></div>
  <div id="chklabel" class="abs">显示质量值</div>
  <div id="hs0" class="abs"></div><div id="hs1" class="abs"></div><div id="hsk" class="abs"></div>
  <div id="hsl" class="abs">1.0x</div>
  <div id="vs0" class="abs"></div><div id="vs1" class="abs"></div><div id="vsk" class="abs"></div>
  <div id="vsl" class="abs">1.0x</div>
  <div id="corner" class="abs"></div><div class="abs" style="left:0;top:789px;width:5px;height:5px;background:radial-gradient(circle at 100% 0,#252734 4.3px,#fff 5px)"></div>
</div>
<svg class="abs" style="left:0;top:0;pointer-events:none" width="1282" height="858" viewBox="0 0 1282 858">
<g stroke="rgba(174,174,174,.86)" stroke-width="1.9" stroke-dasharray="7.7 5" fill="none" style="filter:drop-shadow(0 0 1px rgba(255,255,255,.9)) drop-shadow(0 0 2px rgba(255,255,255,.45))">
<path d="M-340.3 -221.3L-139.6 -20.6M-106.6 12.4L104.0 223.0"/>
<path d="M-420.3 -221.3L-620.9 -20.6M-653.9 12.4L-864.6 223.0"/>
<path d="M-338.3 295.0L-139.6 493.6M-106.6 526.6L97.0 730.3"/>
<path d="M-422.3 295.0L-620.9 493.6M-653.9 526.6L-857.6 730.3"/>
<path d="M-341.3 806.3L-139.6 1007.9M-106.6 1040.9L99.0 1246.6"/>
<path d="M-419.3 806.3L-620.9 1007.9M-653.9 1040.9L-859.6 1246.6"/>
<path d="M174.0 -221.3L374.6 -20.6M407.6 12.4L618.3 223.0"/>
<path d="M94.0 -221.3L-106.6 -20.6M-139.6 12.4L-350.3 223.0"/>
<path d="M176.0 295.0L374.6 493.6M407.6 526.6L611.3 730.3"/>
<path d="M92.0 295.0L-106.6 493.6M-139.6 526.6L-343.3 730.3"/>
<path d="M173.0 806.3L374.6 1007.9M407.6 1040.9L613.3 1246.6"/>
<path d="M95.0 806.3L-106.6 1007.9M-139.6 1040.9L-345.3 1246.6"/>
<path d="M688.3 -221.3L888.9 -20.6M921.9 12.4L1132.6 223.0"/>
<path d="M608.3 -221.3L407.6 -20.6M374.6 12.4L164.0 223.0"/>
<path d="M690.3 295.0L888.9 493.6M921.9 526.6L1125.6 730.3"/>
<path d="M606.3 295.0L407.6 493.6M374.6 526.6L171.0 730.3"/>
<path d="M687.3 806.3L888.9 1007.9M921.9 1040.9L1127.6 1246.6"/>
<path d="M609.3 806.3L407.6 1007.9M374.6 1040.9L169.0 1246.6"/>
<path d="M1202.6 -221.3L1403.2 -20.6M1436.2 12.4L1646.9 223.0"/>
<path d="M1122.6 -221.3L921.9 -20.6M888.9 12.4L678.3 223.0"/>
<path d="M1204.6 295.0L1403.2 493.6M1436.2 526.6L1639.9 730.3"/>
<path d="M1120.6 295.0L921.9 493.6M888.9 526.6L685.3 730.3"/>
<path d="M1201.6 806.3L1403.2 1007.9M1436.2 1040.9L1641.9 1246.6"/>
<path d="M1123.6 806.3L921.9 1007.9M888.9 1040.9L683.3 1246.6"/>
<path d="M1716.9 -221.3L1917.5 -20.6M1950.5 12.4L2161.2 223.0"/>
<path d="M1636.9 -221.3L1436.2 -20.6M1403.2 12.4L1192.6 223.0"/>
<path d="M1718.9 295.0L1917.5 493.6M1950.5 526.6L2154.2 730.3"/>
<path d="M1634.9 295.0L1436.2 493.6M1403.2 526.6L1199.6 730.3"/>
<path d="M1715.9 806.3L1917.5 1007.9M1950.5 1040.9L2156.2 1246.6"/>
<path d="M1637.9 806.3L1436.2 1007.9M1403.2 1040.9L1197.6 1246.6"/>
</g>
<g fill="rgba(160,160,160,.9)" stroke="rgba(160,160,160,.55)" stroke-width=".45" text-anchor="middle" font-weight="400" font-family="Noto Sans CJK SC, Liberation Sans, sans-serif" style="filter:drop-shadow(0 0 1.2px rgba(255,255,255,.8)) drop-shadow(0 0 2.5px rgba(255,255,255,.3))">
<text x="128.4" y="251.5" font-size="22.6" letter-spacing="1.8">Mac助理</text>
<text x="127.4" y="279.7" font-size="18">www.maczl.com</text>
<text x="650.5" y="254.9" font-size="22.6" letter-spacing="1.8">Mac助理</text>
<text x="649.5" y="283.1" font-size="18">www.maczl.com</text>
<text x="1162.2" y="254.9" font-size="22.6" letter-spacing="1.8">Mac助理</text>
<text x="1161.2" y="283.1" font-size="18">www.maczl.com</text>
<text x="128.4" y="760.0" font-size="22.6" letter-spacing="1.8">Mac助理</text>
<text x="127.4" y="788.2" font-size="18">www.maczl.com</text>
<text x="650.5" y="763.4" font-size="22.6" letter-spacing="1.8">Mac助理</text>
<text x="649.5" y="791.6" font-size="18">www.maczl.com</text>
<text x="1162.2" y="763.4" font-size="22.6" letter-spacing="1.8">Mac助理</text>
<text x="1161.2" y="791.6" font-size="18">www.maczl.com</text>
</g></svg>
</body>
</html>
